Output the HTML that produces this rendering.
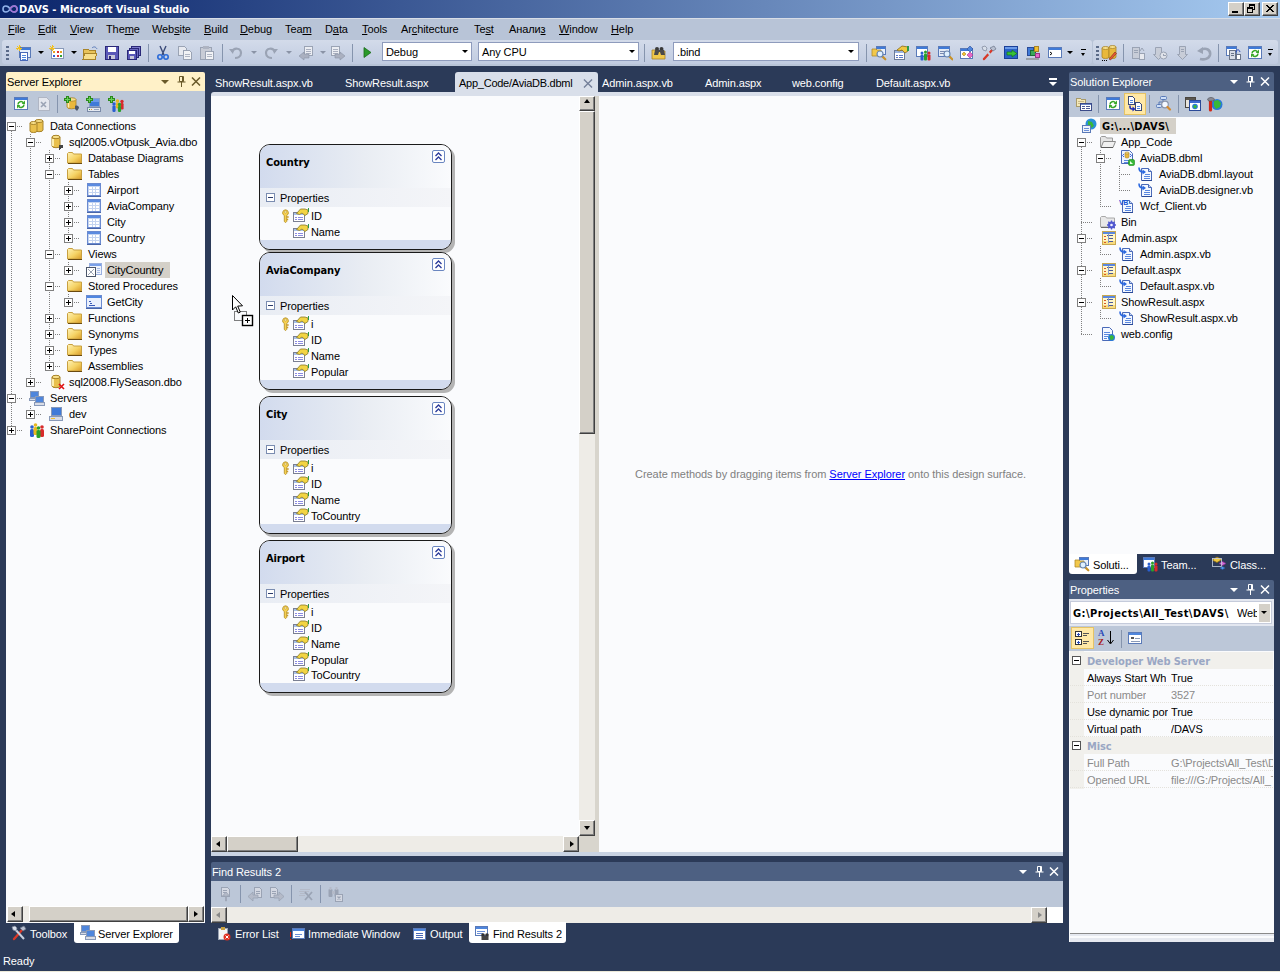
<!DOCTYPE html>
<html><head><meta charset="utf-8"><title>DAVS - Microsoft Visual Studio</title>
<style>
*{box-sizing:border-box;margin:0;padding:0}
html,body{width:1280px;height:972px;overflow:hidden}
body{background:#2b3a58;font-family:"Liberation Sans","DejaVu Sans",sans-serif;font-size:11px;color:#000;position:relative;line-height:13px}
.a{position:absolute}
.t{position:absolute;white-space:nowrap;line-height:13px;height:13px;margin-top:1px;letter-spacing:-0.1px}
.b{font-family:"DejaVu Sans Condensed","Liberation Sans",sans-serif;font-weight:bold}
u{text-decoration:underline;text-underline-offset:1px}
svg{position:absolute;display:block}
.i{position:absolute;width:16px;height:16px}
.i svg{left:0;top:0}
#title{left:0;top:0;width:1280px;height:18px;background:linear-gradient(90deg,#0a246a,#a6caf0)}
.wbtn{position:absolute;top:2px;width:16px;height:14px;background:#d4d0c8;border:1px solid;border-color:#fff #404040 #404040 #fff;box-shadow:inset -1px -1px 0 #808080}
#menu{left:0;top:18px;width:1280px;height:22px;background:#b8c4d7;border-top:1px solid #d8dde6}
#menu .t{top:3px}
#tb{left:0;top:40px;width:1280px;height:26px;background:#b8c4d7}
.tbar{position:absolute;top:0px;height:24px;background:linear-gradient(#d3dbea,#c0cbe0);border-radius:3px}
.grip{position:absolute;width:3px;background:repeating-linear-gradient(#5a6a88 0 2px,transparent 2px 4px)}
.sep{position:absolute;width:1px;background:#8594ad}
.combo{position:absolute;height:19px;background:#fff;border:1px solid #8e9bbc}
.combo .t{left:3px;top:2px}
.dd{position:absolute;width:0;height:0;border:3px solid transparent;border-top:3px solid #000;border-bottom:0}
.panel{position:absolute}
.panel:before{content:"";position:absolute;left:0;right:0;top:10px;bottom:0;background:var(--bg,#fafbfd)}
.ptitle{position:absolute;left:0;top:0;right:0;height:19px;background:#4d6082;color:#fff;border-radius:2px 2px 0 0}
.ptitle.act{background:#fff1c8;color:#000}
.ptitle .t{left:1px;top:3px}
.ptool{position:absolute;left:0;right:0;top:19px;height:26px;background:#bcc7d8}
.sb{position:absolute;background:#eeece7}
.sbtn{position:absolute;width:16px;height:16px;background:#d4d0c8;border:1px solid;border-color:#fff #404040 #404040 #fff;box-shadow:inset -1px -1px 0 #808080,inset 1px 1px 0 #d4d0c8}
.arr{position:absolute;width:0;height:0;border:3px solid transparent}
.exp{position:absolute;width:9px;height:9px;border:1px solid #808080;background:#fff}
.exp:before{content:"";position:absolute;left:1px;top:3px;width:5px;height:1px;background:#000}
.exp.plus:after{content:"";position:absolute;left:3px;top:1px;width:1px;height:5px;background:#000}
.vd{position:absolute;width:1px;background:repeating-linear-gradient(#808080 0 1px,transparent 1px 2px)}
.hd{position:absolute;height:1px;background:repeating-linear-gradient(90deg,#808080 0 1px,transparent 1px 2px)}
.btab{position:absolute;height:20px;color:#fff}
.btab.act{background:#fff;color:#000;border-radius:0 0 3px 3px}
.btab .t{top:3px}
.dtab{position:absolute;top:73px;height:19px;color:#fff}
.dtab .t{top:3px;left:0}
.ent{position:absolute;left:259px;width:193px;border:1px solid #1a1a1a;border-radius:11px;background:#fafbfd;box-shadow:3px 3px 0 #b4b4b4;overflow:hidden}
.ent .hdr{position:absolute;left:0;right:0;top:0;height:43px;background:linear-gradient(90deg,#d2dbee 0%,#e9edf3 55%,#fafbfd 100%)}
.ent .hdr .t{left:6px;top:10px;font-size:11px}
.ent .comp{position:absolute;left:0;right:0;top:43px;height:19px;background:linear-gradient(90deg,#e9edf4,#f4f5f8)}
.ent .comp .t{left:20px;top:3px}
.ent .foot{position:absolute;left:0;right:0;bottom:0;height:9px;background:#d2dbee}
.chev{position:absolute;left:172px;top:5px;width:13px;height:13px;border:1px solid #6a86c0;border-radius:2px;background:#fff}
.mbox{position:absolute;left:6px;top:48px;width:9px;height:9px;border:1px solid #7a8cb0;background:#fff}
.mbox:before{content:"";position:absolute;left:1px;top:3px;width:5px;height:1px;background:#2a3a6a}
.pg{position:absolute;left:1070px;width:203px;height:17px}
.pg .t{top:2px}
</style></head><body>
<div id="title" class="a"><svg style="left:2px;top:4px" width="16" height="10" viewBox="0 0 16 10"><path d="M1 5c0-4 5-4 7 0s7 4 7 0-5-4-7 0-7 4-7 0z" fill="none" stroke="#8fb0e8" stroke-width="1.600"/><path d="M8 5c2-4 7-4 7 0s-5 4-7 0" fill="none" stroke="#a070d0" stroke-width="1.600"/></svg><span class="t b" style="left:19px;top:2px;color:#fff;font-size:11px;letter-spacing:0px">DAVS - Microsoft Visual Studio</span><div class="wbtn" style="left:1228px"><i class="a" style="left:3px;top:8px;width:6px;height:2px;background:#000"></i></div><div class="wbtn" style="left:1244px"><i class="a" style="left:4px;top:1px;width:6px;height:6px;border:1px solid #000;border-top-width:2px"></i><i class="a" style="left:2px;top:4px;width:6px;height:6px;border:1px solid #000;border-top-width:2px;background:#d4d0c8"></i></div><div class="wbtn" style="left:1262px"><svg style="left:3px;top:2px" width="8" height="7" viewBox="0 0 8 7"><path d="M0 0l7 7M1 0l7 7M7 0l-7 7M8 0l-7 7" stroke="#000" stroke-width="1"/></svg></div></div>
<div id="menu" class="a"><span class="t " style="left:8px;top:3px;"><u>F</u>ile</span><span class="t " style="left:38px;top:3px;"><u>E</u>dit</span><span class="t " style="left:70px;top:3px;"><u>V</u>iew</span><span class="t " style="left:106px;top:3px;">The<u>m</u>e</span><span class="t " style="left:152px;top:3px;">Web<u>s</u>ite</span><span class="t " style="left:204px;top:3px;"><u>B</u>uild</span><span class="t " style="left:240px;top:3px;"><u>D</u>ebug</span><span class="t " style="left:285px;top:3px;">Tea<u>m</u></span><span class="t " style="left:325px;top:3px;">D<u>a</u>ta</span><span class="t " style="left:362px;top:3px;"><u>T</u>ools</span><span class="t " style="left:401px;top:3px;">Ar<u>c</u>hitecture</span><span class="t " style="left:474px;top:3px;">Te<u>s</u>t</span><span class="t " style="left:509px;top:3px;">Анали<u>з</u></span><span class="t " style="left:559px;top:3px;"><u>W</u>indow</span><span class="t " style="left:611px;top:3px;"><u>H</u>elp</span></div>
<div id="tb" class="a"><div class="tbar" style="left:2px;width:1090px"></div><div class="tbar" style="left:1093px;width:185px"></div><div class="grip" style="left:6px;top:6px;height:15px"></div><div class="grip" style="left:1096px;top:6px;height:15px"></div><span class="i" style="left:16px;top:5px;"><svg width="16" height="16" viewBox="0 0 16 16" shape-rendering="crispEdges"><rect x="3.5" y="2.5" width="11" height="10" fill="#e8f0fc" stroke="#5a7ab8"/><rect x="4" y="3" width="10" height="2" fill="#3f7ad8"/><rect x="4.500" y="7.500" width="7" height="8" fill="#fff" stroke="#4a6ab8"/><path d="M6 10h4M6 12h4M6 14h4" stroke="#4f86dc"/><path d="M1 1l4 4M5 1l-4 4M3 0v6M0 3h6" stroke="#f2c020"/></svg></span><div class="dd" style="left:38px;top:11px"></div><span class="i" style="left:49px;top:5px;"><svg width="16" height="16" viewBox="0 0 16 16" shape-rendering="crispEdges"><rect x="2.500" y="3.500" width="12" height="10" fill="#fff" stroke="#8899b8"/><rect x="4" y="6" width="2" height="2" fill="#e8a020"/><rect x="8" y="6" width="2" height="2" fill="#e03030"/><rect x="11" y="6" width="2" height="2" fill="#e8a020"/><rect x="4" y="10" width="2" height="2" fill="#3060d8"/><rect x="8" y="10" width="2" height="2" fill="#e03030"/><rect x="11" y="10" width="2" height="2" fill="#30a030"/><path d="M1 1l4 4M5 1l-4 4M3 0v6M0 3h6" stroke="#f2c020"/></svg></span><div class="dd" style="left:71px;top:11px"></div><span class="i" style="left:82px;top:5px;"><svg width="16" height="16" viewBox="0 0 16 16" shape-rendering="crispEdges"><path d="M1 4h5l1 1h6v9H1z" fill="#e8c35a" stroke="#a8842a"/><path d="M3 8h12l-2 6H1z" fill="#f7df8c" stroke="#a8842a"/><path d="M10 3c2-2 4-1 5 1" fill="none" stroke="#5a7ab8" shape-rendering="auto"/></svg></span><span class="i" style="left:104px;top:5px;"><svg width="16" height="16" viewBox="0 0 16 16" shape-rendering="crispEdges"><rect x="1.500" y="1.500" width="13" height="13" fill="#5a58b8" stroke="#2a2878"/><rect x="4" y="2" width="8" height="5" fill="#fff"/><rect x="4" y="10" width="7" height="4" fill="#c8c8d8"/><rect x="5" y="11" width="2" height="3" fill="#2a2878"/></svg></span><span class="i" style="left:126px;top:5px;"><svg width="16" height="16" viewBox="0 0 16 16" shape-rendering="crispEdges"><rect x="5.500" y="1.500" width="9" height="9" fill="#7a78c8" stroke="#2a2878"/><rect x="3.500" y="3.500" width="9" height="9" fill="#6a68c0" stroke="#2a2878"/><rect x="1.500" y="5.500" width="9" height="9" fill="#5a58b8" stroke="#2a2878"/><rect x="3" y="6" width="6" height="3" fill="#fff"/><rect x="4" y="11" width="4" height="3" fill="#c8c8d8"/></svg></span><div class="sep" style="left:148px;top:4px;height:18px"></div><span class="i" style="left:155px;top:5px;"><svg width="16" height="16" viewBox="0 0 16 16" shape-rendering="crispEdges"><g shape-rendering="auto"><path d="M5 1l4 9M11 1l-4 9" stroke="#3a4a78" stroke-width="1.400"/><circle cx="5" cy="12" r="2.200" fill="none" stroke="#2a6ad8" stroke-width="1.600"/><circle cx="11" cy="12" r="2.200" fill="none" stroke="#2a6ad8" stroke-width="1.600"/></g></svg></span><span class="i" style="left:177px;top:5px;"><svg width="16" height="16" viewBox="0 0 16 16" shape-rendering="crispEdges"><path d="M1.500 1.500h6l2 2v7h-8z" fill="#e8eaf0" stroke="#9aa3b4"/><path d="M6.500 5.500h6l2 2v7h-8z" fill="#f2f3f6" stroke="#9aa3b4"/><path d="M8 9h5M8 11h5" stroke="#b0b6c4"/></svg></span><span class="i" style="left:199px;top:5px;"><svg width="16" height="16" viewBox="0 0 16 16" shape-rendering="crispEdges"><rect x="1.500" y="2.500" width="11" height="12" fill="#c8ccd6" stroke="#9aa3b4"/><rect x="4" y="1" width="6" height="3" fill="#aeb4c2"/><rect x="6.500" y="6.500" width="8" height="8" fill="#f2f3f6" stroke="#9aa3b4"/><path d="M8 9h5M8 11h5" stroke="#b0b6c4"/></svg></span><div class="sep" style="left:222px;top:4px;height:18px"></div><span class="i" style="left:228px;top:5px;"><svg width="16" height="16" viewBox="0 0 16 16" shape-rendering="crispEdges"><g shape-rendering="auto"><path d="M4 7c2-5 9-4 9 1 0 4-4 5-6 5" fill="none" stroke="#9aa3b4" stroke-width="2.200"/><path d="M1 4l5 0-1 5z" fill="#9aa3b4"/></g></svg></span><div class="dd" style="left:251px;top:11px;border-top-color:#8a93a6"></div><span class="i" style="left:263px;top:5px;"><svg width="16" height="16" viewBox="0 0 16 16" shape-rendering="crispEdges"><g transform="translate(16,0) scale(-1,1)" shape-rendering="auto"><path d="M4 7c2-5 9-4 9 1 0 4-4 5-6 5" fill="none" stroke="#9aa3b4" stroke-width="2.200"/><path d="M1 4l5 0-1 5z" fill="#9aa3b4"/></g></svg></span><div class="dd" style="left:286px;top:11px;border-top-color:#8a93a6"></div><span class="i" style="left:298px;top:5px;"><svg width="16" height="16" viewBox="0 0 16 16" shape-rendering="crispEdges"><rect x="6.500" y="1.500" width="8" height="9" fill="#eceef3" stroke="#9aa3b4"/><path d="M8 4h5M8 6h5M8 8h5" stroke="#aab0c0"/><path d="M1 11l5-4v2h5v4h-5v2z" fill="#aab0c0" stroke="#8a93a6" stroke-width=".6" shape-rendering="auto"/></svg></span><div class="dd" style="left:320px;top:11px;border-top-color:#8a93a6"></div><span class="i" style="left:330px;top:5px;"><svg width="16" height="16" viewBox="0 0 16 16" shape-rendering="crispEdges"><rect x="1.500" y="1.500" width="8" height="9" fill="#eceef3" stroke="#9aa3b4"/><path d="M3 4h5M3 6h5M3 8h5" stroke="#aab0c0"/><path d="M15 11l-5-4v2h-5v4h5v2z" fill="#aab0c0" stroke="#8a93a6" stroke-width=".6" shape-rendering="auto"/></svg></span><div class="sep" style="left:352px;top:4px;height:18px"></div><svg style="left:363px;top:7px" width="9" height="11" viewBox="0 0 9 11"><path d="M1 0.500l7 5-7 5z" fill="#2a9a2a" stroke="#1a6a1a" stroke-width=".8"/></svg><div class="combo" style="left:382px;top:2px;width:90px"><span class="t">Debug</span><div class="dd" style="left:79px;top:7px"></div></div><div class="combo" style="left:478px;top:2px;width:161px"><span class="t">Any CPU</span><div class="dd" style="left:150px;top:7px"></div></div><div class="sep" style="left:644px;top:4px;height:18px"></div><span class="i" style="left:651px;top:5px;"><svg width="16" height="16" viewBox="0 0 16 16" shape-rendering="crispEdges"><path d="M1 5h5l1 1h7v8H1z" fill="#f0c84a" stroke="#a8842a" stroke-width=".8" shape-rendering="auto"/><g shape-rendering="auto"><circle cx="6" cy="4" r="2" fill="#3a3a3a"/><circle cx="10.500" cy="4" r="2" fill="#3a3a3a"/><path d="M4 5l-1 5h4l1-3h1l1 3h4l-1-5z" fill="#4a4a4a"/></g></svg></span><div class="combo" style="left:673px;top:2px;width:186px"><span class="t">.bind</span><div class="dd" style="left:174px;top:7px"></div></div><div class="sep" style="left:866px;top:4px;height:18px"></div><span class="i" style="left:871px;top:5px;"><svg width="16" height="16" viewBox="0 0 16 16" shape-rendering="crispEdges"><rect x="5.5" y="1.5" width="9" height="8" fill="#eaf1fc" stroke="#5a7ab8"/><rect x="6" y="2" width="8" height="2" fill="#3f7ad8"/><path d="M1 4h4l1 1h4v6H1z" fill="#f2c84a" stroke="#b08a2a" stroke-width=".8" shape-rendering="auto"/><g shape-rendering="auto"><path d="M11.1 11.1l3.2 3.2" stroke="#c8922a" stroke-width="2.200" stroke-linecap="round"/><circle cx="9" cy="9" r="3" fill="#dff0ff" stroke="#6a86b0" stroke-width="1.200"/></g></svg></span><span class="i" style="left:893px;top:5px;"><svg width="16" height="16" viewBox="0 0 16 16" shape-rendering="crispEdges"><rect x="1.500" y="5.500" width="10" height="9" fill="#fff" stroke="#6a7a98"/><rect x="2" y="6" width="9" height="2" fill="#9ab4e0"/><path d="M3 10h2M6 10h4M3 12h2M6 12h4" stroke="#5a78c8"/><path d="M4 5l5-4 6 1v4l-3 2-3-3-3 1z" fill="#f0c840" stroke="#8a6a18" stroke-width=".8" shape-rendering="auto"/><rect x="14" y="1" width="1.500" height="5" fill="#2a9a4a"/></svg></span><span class="i" style="left:915px;top:5px;"><svg width="16" height="16" viewBox="0 0 16 16" shape-rendering="crispEdges"><rect x="1.5" y="1.5" width="11" height="10" fill="#fff" stroke="#5a7ab8"/><rect x="2" y="2" width="10" height="2" fill="#3f7ad8"/><g shape-rendering="auto"><circle cx="7" cy="8" r="1.500" fill="#2a5fd0"/><rect x="5.500" y="9.500" width="3" height="6" rx="1" fill="#2a5fd0"/><circle cx="10.500" cy="7" r="1.500" fill="#2aa02a"/><rect x="9" y="8.500" width="3" height="7" rx="1" fill="#2aa02a"/><circle cx="14" cy="8" r="1.500" fill="#d82a2a"/><rect x="12.500" y="9.500" width="3" height="6" rx="1" fill="#d82a2a"/></g></svg></span><span class="i" style="left:937px;top:5px;"><svg width="16" height="16" viewBox="0 0 16 16" shape-rendering="crispEdges"><rect x="1.5" y="1.5" width="11" height="10" fill="#e4ebf6" stroke="#5a7ab8"/><rect x="2" y="2" width="10" height="2" fill="#3f7ad8"/><path d="M3 6h7M3 8h5" stroke="#7a8ab0"/><g shape-rendering="auto"><path d="M12.1 11.1l3.2 3.2" stroke="#c8922a" stroke-width="2.200" stroke-linecap="round"/><circle cx="10" cy="9" r="3" fill="#dff0ff" stroke="#6a86b0" stroke-width="1.200"/></g></svg></span><span class="i" style="left:959px;top:5px;"><svg width="16" height="16" viewBox="0 0 16 16" shape-rendering="crispEdges"><rect x="1.5" y="3.5" width="12" height="10" fill="#fff" stroke="#5a7ab8"/><rect x="2" y="4" width="11" height="2" fill="#3f7ad8"/><g shape-rendering="auto"><path d="M5 7l2 2-2 2-2-2z" fill="#f0c030" stroke="#a88428" stroke-width=".6"/><path d="M11 1l3 3-3 3-3-3z" fill="#4f86dc" stroke="#2a4a98" stroke-width=".6"/><path d="M11 7l3 3-3 3-3-3z" fill="#e868c8" stroke="#983888" stroke-width=".6"/></g></svg></span><span class="i" style="left:981px;top:5px;"><svg width="16" height="16" viewBox="0 0 16 16" shape-rendering="crispEdges"><g shape-rendering="auto"><path d="M3 14l9-10" stroke="#d83828" stroke-width="2.400" stroke-linecap="round"/><path d="M9 3l4-2 2 3-3 2z" fill="#b8c0d0" stroke="#6a7488" stroke-width=".7"/><path d="M3 3l10 11" stroke="#c8d0de" stroke-width="2"/><path d="M1 2l3-1 2 2-1 3-3-1z" fill="#d8dfea" stroke="#7a8498" stroke-width=".7"/></g></svg></span><span class="i" style="left:1003px;top:5px;"><svg width="16" height="16" viewBox="0 0 16 16" shape-rendering="crispEdges"><rect x="1.500" y="1.500" width="13" height="12" fill="#2a62c8" stroke="#1a3f98"/><rect x="2" y="2" width="12" height="2" fill="#6a9ae8"/><path d="M4 7h5V5l5 3.500-5 3.500v-2H4z" fill="#38c038" stroke="#187818" stroke-width=".7" shape-rendering="auto"/></svg></span><span class="i" style="left:1025px;top:5px;"><svg width="16" height="16" viewBox="0 0 16 16" shape-rendering="crispEdges"><rect x="2.500" y="2.500" width="6" height="8" fill="#3f7ad8" stroke="#2a4a98"/><rect x="5.500" y="5.500" width="5" height="5" fill="#38a858" stroke="#1a6a38"/><rect x="9.500" y="1.500" width="4" height="5" fill="#f0c030" stroke="#a88428"/><rect x="10.500" y="8.500" width="4" height="4" fill="#e868c8" stroke="#983888"/><rect x="1" y="13" width="13" height="2" fill="#9aa0a8"/></svg></span><span class="i" style="left:1047px;top:5px;"><svg width="16" height="16" viewBox="0 0 16 16" shape-rendering="crispEdges"><rect x="1.5" y="2.5" width="13" height="10" fill="#fff" stroke="#5a7ab8"/><rect x="2" y="3" width="12" height="2" fill="#3f7ad8"/><path d="M3 7l2 1.500-2 1.500" fill="none" stroke="#000" shape-rendering="auto"/></svg></span><div class="dd" style="left:1067px;top:11px"></div><div class="a" style="left:1081px;top:9px;width:5px;height:1px;background:#000"></div><div class="dd" style="left:1081px;top:13px;border-width:3px 2.500px 0"></div><span class="i" style="left:1101px;top:5px;"><svg width="16" height="16" viewBox="0 0 16 16" shape-rendering="crispEdges"><g shape-rendering="auto"><path d="M1 3v9a3.500 1.500 0 0 0 7 0V3z" fill="#e9b83c" stroke="#a8842a" stroke-width=".8"/><ellipse cx="4.500" cy="3" rx="3.500" ry="1.500" fill="#f8e08a" stroke="#a8842a" stroke-width=".8"/><path d="M8 2v10a3.500 1.500 0 0 0 7 0V2z" fill="#e9b83c" stroke="#a8842a" stroke-width=".8"/><ellipse cx="11.500" cy="2" rx="3.500" ry="1.500" fill="#f8e08a" stroke="#a8842a" stroke-width=".8"/><path d="M8 14l6-7 1.500 1.500-6 6.500z" fill="#e85838" stroke="#7a2a18" stroke-width=".6"/></g><path d="M1 15h1M3 15h1M5 15h1" stroke="#000"/></svg></span><div class="sep" style="left:1123px;top:4px;height:18px"></div><span class="i" style="left:1130px;top:5px;"><svg width="16" height="16" viewBox="0 0 16 16" shape-rendering="crispEdges"><rect x="2.500" y="2.500" width="7" height="11" fill="#c8cdd8" stroke="#9aa3b4"/><path d="M4 5h4M4 7h4" stroke="#9aa3b4"/><rect x="9.500" y="8.500" width="5" height="6" fill="#e8eaf0" stroke="#9aa3b4"/><path d="M10 6l2-3 2 3" fill="none" stroke="#9aa3b4" shape-rendering="auto"/></svg></span><span class="i" style="left:1152px;top:5px;"><svg width="16" height="16" viewBox="0 0 16 16" shape-rendering="crispEdges"><path d="M3.500 2.500h6v7h2l-5 5-5-5h2z" fill="#c8cdd8" stroke="#9aa3b4" shape-rendering="auto"/><circle cx="11.500" cy="10.500" r="3.500" fill="#e0e3ea" stroke="#9aa3b4" shape-rendering="auto"/><path d="M11.500 8.500v2h2" fill="none" stroke="#9aa3b4"/></svg></span><span class="i" style="left:1174px;top:5px;"><svg width="16" height="16" viewBox="0 0 16 16" shape-rendering="crispEdges"><path d="M5.500 1.500h6v8h2l-5 5-5-5h2z" fill="#c8cdd8" stroke="#9aa3b4" shape-rendering="auto"/><path d="M7 4h3M7 6h3" stroke="#9aa3b4"/></svg></span><span class="i" style="left:1196px;top:5px;"><svg width="16" height="16" viewBox="0 0 16 16" shape-rendering="crispEdges"><g shape-rendering="auto"><path d="M5 5c5-3 10 0 9 5-1 4-6 5-10 4" fill="none" stroke="#9aa3b4" stroke-width="2.600"/><path d="M1 6l6-4v7z" fill="#9aa3b4"/></g></svg></span><div class="sep" style="left:1218px;top:4px;height:18px"></div><span class="i" style="left:1225px;top:5px;"><svg width="16" height="16" viewBox="0 0 16 16" shape-rendering="crispEdges"><rect x="1.5" y="1.5" width="10" height="9" fill="#fff" stroke="#5a7ab8"/><rect x="2" y="2" width="9" height="2" fill="#3f7ad8"/><rect x="4.500" y="5.500" width="6" height="9" fill="#d8dce6" stroke="#6a7488"/><path d="M6 8h3M6 10h3" stroke="#6a7488"/><rect x="11.500" y="9.500" width="4" height="5" fill="#fff" stroke="#6a7488"/><path d="M11 7c1-3 3-3 4 0" fill="none" stroke="#2a4ab8" shape-rendering="auto"/></svg></span><span class="i" style="left:1247px;top:5px;"><svg width="16" height="16" viewBox="0 0 16 16" shape-rendering="crispEdges"><rect x="1.5" y="1.5" width="13" height="12" fill="#fff" stroke="#5a7ab8"/><rect x="2" y="2" width="12" height="2" fill="#3f7ad8"/><g shape-rendering="auto"><path d="M5 8.500A3 3 0 0 1 10.400 6.800" fill="none" stroke="#3aa82a" stroke-width="1.600"/><path d="M11 8.500A3 3 0 0 1 5.600 10.200" fill="none" stroke="#3aa82a" stroke-width="1.600"/><path d="M12 4.600v3.400h-3.400z" fill="#3aa82a"/><path d="M4 12.400v-3.400h3.400z" fill="#3aa82a"/></g></svg></span><div class="a" style="left:1268px;top:9px;width:5px;height:1px;background:#000"></div><div class="dd" style="left:1268px;top:13px;border-width:3px 2.500px 0"></div></div>
<div class="panel" style="left:6px;top:72px;width:199px;height:851px"><div class="ptitle act"><span class="t">Server Explorer</span><div class="dd" style="left:155px;top:8px;border-width:4px 4px 0;border-top-color:#6a5a2a"></div><svg style="left:171px;top:4px" width="9" height="11" viewBox="0 0 9 11"><path d="M2.500 0.500h4v5h-4zM0.500 6h8M4.500 6v5" fill="none" stroke="#6a5a2a" stroke-width="1"/><path d="M5.500 1v5" stroke="#6a5a2a"/></svg><svg style="left:185px;top:5px" width="10" height="9" viewBox="0 0 10 9" shape-rendering="auto"><path d="M1 0.500l8 8M9 0.500l-8 8" stroke="#6a5a2a" stroke-width="1.500"/></svg></div><div class="ptool"><span class="i" style="left:7px;top:5px;"><svg width="16" height="16" viewBox="0 0 16 16" shape-rendering="crispEdges"><rect x="1.5" y="1.5" width="13" height="12" fill="#fff" stroke="#5a7ab8"/><rect x="2" y="2" width="12" height="2" fill="#3f7ad8"/><g shape-rendering="auto"><path d="M5 8.500A3 3 0 0 1 10.400 6.800" fill="none" stroke="#3aa82a" stroke-width="1.600"/><path d="M11 8.500A3 3 0 0 1 5.600 10.200" fill="none" stroke="#3aa82a" stroke-width="1.600"/><path d="M12 4.600v3.400h-3.400z" fill="#3aa82a"/><path d="M4 12.400v-3.400h3.400z" fill="#3aa82a"/></g></svg></span><span class="i" style="left:30px;top:5px;"><svg width="16" height="16" viewBox="0 0 16 16" shape-rendering="crispEdges"><path d="M2.500 1.500h8l3 3v10h-11z" fill="#e4e7ee" stroke="#b0b6c4"/><path d="M5 6l5 5M10 6l-5 5" stroke="#9aa3b4" stroke-width="1.600" shape-rendering="auto"/></svg></span><div class="sep" style="left:51px;top:4px;height:18px"></div><span class="i" style="left:58px;top:5px;"><svg width="16" height="16" viewBox="0 0 16 16" shape-rendering="crispEdges"><g shape-rendering="auto"><path d="M3 3.500v7.500a4.500 1.800 0 0 0 9 0V3.500z" fill="#eab83c" stroke="#a8842a" stroke-width=".8"/><ellipse cx="7.500" cy="3.500" rx="4.500" ry="1.800" fill="#f8e08a" stroke="#a8842a" stroke-width=".8"/><path d="M4.500 5v6.500" stroke="#fbeeb0" stroke-width="1.500"/><path d="M11 10c2-1 4 0 4 2l-2 3-2-2z" fill="#4a5568"/></g><path d="M2.500 0.500h2v2h2v2h-2v2h-2v-2h-2v-2h2z" fill="#6ad05a" stroke="#2a8a1a" stroke-width="1"/></svg></span><span class="i" style="left:80px;top:5px;"><svg width="16" height="16" viewBox="0 0 16 16" shape-rendering="crispEdges"><rect x="3.500" y="2.500" width="10" height="8" fill="#3f7ad8" stroke="#8aa0c8"/><rect x="4" y="3" width="9" height="3" fill="#6a9ae8"/><rect x="1.500" y="11.500" width="13" height="4" fill="#e4e8f0" stroke="#7a8aa8"/><rect x="3" y="13" width="1" height="1" fill="#38a838"/><rect x="5" y="13" width="1" height="1" fill="#e8a020"/><path d="M8 13.500h5" stroke="#9aa8c0"/><path d="M2.500 0.500h2v2h2v2h-2v2h-2v-2h-2v-2h2z" fill="#6ad05a" stroke="#2a8a1a" stroke-width="1"/></svg></span><span class="i" style="left:102px;top:5px;"><svg width="16" height="16" viewBox="0 0 16 16" shape-rendering="crispEdges"><g shape-rendering="auto"><circle cx="9.500" cy="5" r="1.700" fill="#e8b820"/><rect x="8" y="6.500" width="3.200" height="6" rx="1.200" fill="#e8b820"/><circle cx="14" cy="5.500" r="1.700" fill="#d82a2a"/><rect x="12.400" y="7" width="3.200" height="6.500" rx="1.200" fill="#d82a2a"/><circle cx="6" cy="8" r="1.700" fill="#2a5fd0"/><rect x="4.400" y="9.500" width="3.200" height="6.500" rx="1.200" fill="#2a5fd0"/><circle cx="11.500" cy="8.500" r="1.700" fill="#2aa02a"/><rect x="9.900" y="10" width="3.200" height="6" rx="1.200" fill="#2aa02a"/></g><path d="M2.500 0.500h2v2h2v2h-2v2h-2v-2h-2v-2h2z" fill="#6ad05a" stroke="#2a8a1a" stroke-width="1"/></svg></span></div><div class="vd" style="left:5px;top:59px;height:295px"></div><div class="vd" style="left:24px;top:62px;height:248px"></div><div class="vd" style="left:43px;top:78px;height:216px"></div><div class="vd" style="left:62px;top:110px;height:56px"></div><div class="vd" style="left:62px;top:190px;height:8px"></div><div class="vd" style="left:62px;top:222px;height:8px"></div><div class="vd" style="left:24px;top:334px;height:8px"></div><div class="hd" style="left:11px;top:54px;width:6px"></div><div class="exp " style="left:1px;top:50px"></div><span class="i" style="left:23px;top:46px;"><svg width="16" height="16" viewBox="0 0 16 16" shape-rendering="crispEdges"><path d="M6 3v9a3.5 1.5 0 0 0 8 0V3z" fill="#e9c04c" stroke="#a8842a" shape-rendering="auto"/><ellipse cx="10" cy="3" rx="4" ry="1.5" fill="#f8e08a" stroke="#a8842a" shape-rendering="auto"/><path d="M1 5v8a3.5 1.5 0 0 0 7 0V5z" fill="#e9c04c" stroke="#a8842a" shape-rendering="auto"/><ellipse cx="4.5" cy="5" rx="3.5" ry="1.5" fill="#f8e08a" stroke="#a8842a" shape-rendering="auto"/></svg></span><span class="t " style="left:44px;top:47px;">Data Connections</span><div class="hd" style="left:30px;top:70px;width:6px"></div><div class="exp " style="left:20px;top:66px"></div><span class="i" style="left:44px;top:62px;"><svg width="16" height="16" viewBox="0 0 16 16" shape-rendering="crispEdges"><path d="M2 3v9a4 1.7 0 0 0 8 0V3z" fill="#e9c04c" stroke="#a8842a" shape-rendering="auto"/><ellipse cx="6" cy="3" rx="4" ry="1.7" fill="#f8e08a" stroke="#a8842a" shape-rendering="auto"/><path d="M3 5v7" stroke="#fbeeb0" stroke-width="1.5"/><path d="M9 11h4v3h-2l-2 2z" fill="#444"/></svg></span><span class="t " style="left:63px;top:63px;">sql2005.vOtpusk_Avia.dbo</span><div class="hd" style="left:49px;top:86px;width:6px"></div><div class="exp plus" style="left:39px;top:82px"></div><span class="i" style="left:61px;top:78px;"><svg width="16" height="16" viewBox="0 0 16 16" shape-rendering="crispEdges"><defs><linearGradient id="fg" x1="0" y1="0" x2="1" y2="1"><stop offset="0" stop-color="#fff3b8"/><stop offset=".55" stop-color="#f5d264"/><stop offset="1" stop-color="#d89a28"/></linearGradient></defs><path d="M0.500 3.500l1-1h4l1 1.500h8v9h-14z" fill="url(#fg)" stroke="#c8a040" stroke-width="1" shape-rendering="auto"/><path d="M1 13.500h14" stroke="#6a4a10"/></svg></span><span class="t " style="left:82px;top:79px;">Database Diagrams</span><div class="hd" style="left:49px;top:102px;width:6px"></div><div class="exp " style="left:39px;top:98px"></div><span class="i" style="left:61px;top:94px;"><svg width="16" height="16" viewBox="0 0 16 16" shape-rendering="crispEdges"><defs><linearGradient id="fg" x1="0" y1="0" x2="1" y2="1"><stop offset="0" stop-color="#fff3b8"/><stop offset=".55" stop-color="#f5d264"/><stop offset="1" stop-color="#d89a28"/></linearGradient></defs><path d="M0.500 3.500l1-1h4l1 1.500h8v9h-14z" fill="url(#fg)" stroke="#c8a040" stroke-width="1" shape-rendering="auto"/><path d="M1 13.500h14" stroke="#6a4a10"/></svg></span><span class="t " style="left:82px;top:95px;">Tables</span><div class="hd" style="left:68px;top:118px;width:6px"></div><div class="exp plus" style="left:58px;top:114px"></div><span class="i" style="left:80px;top:110px;"><svg width="16" height="16" viewBox="0 0 16 16" shape-rendering="crispEdges"><rect x="1.500" y="1.500" width="13" height="12" fill="#fff" stroke="#6a8ad0"/><rect x="2" y="2" width="12" height="2" fill="#5b8be0"/><rect x="2" y="4" width="12" height="9" fill="#c4d4f0"/><path d="M3 5h2.500v2H3zM6.500 5H9v2H6.500zM10 5h3v2h-3zM3 8h2.500v2H3zM6.500 8H9v2H6.500zM10 8h3v2h-3zM3 11h2.500v1.500H3zM6.500 11H9v1.500H6.500zM10 11h3v1.500h-3z" fill="#fff"/><path d="M1 14h14" stroke="#4a66a8"/></svg></span><span class="t " style="left:101px;top:111px;">Airport</span><div class="hd" style="left:68px;top:134px;width:6px"></div><div class="exp plus" style="left:58px;top:130px"></div><span class="i" style="left:80px;top:126px;"><svg width="16" height="16" viewBox="0 0 16 16" shape-rendering="crispEdges"><rect x="1.500" y="1.500" width="13" height="12" fill="#fff" stroke="#6a8ad0"/><rect x="2" y="2" width="12" height="2" fill="#5b8be0"/><rect x="2" y="4" width="12" height="9" fill="#c4d4f0"/><path d="M3 5h2.500v2H3zM6.500 5H9v2H6.500zM10 5h3v2h-3zM3 8h2.500v2H3zM6.500 8H9v2H6.500zM10 8h3v2h-3zM3 11h2.500v1.500H3zM6.500 11H9v1.500H6.500zM10 11h3v1.500h-3z" fill="#fff"/><path d="M1 14h14" stroke="#4a66a8"/></svg></span><span class="t " style="left:101px;top:127px;">AviaCompany</span><div class="hd" style="left:68px;top:150px;width:6px"></div><div class="exp plus" style="left:58px;top:146px"></div><span class="i" style="left:80px;top:142px;"><svg width="16" height="16" viewBox="0 0 16 16" shape-rendering="crispEdges"><rect x="1.500" y="1.500" width="13" height="12" fill="#fff" stroke="#6a8ad0"/><rect x="2" y="2" width="12" height="2" fill="#5b8be0"/><rect x="2" y="4" width="12" height="9" fill="#c4d4f0"/><path d="M3 5h2.500v2H3zM6.500 5H9v2H6.500zM10 5h3v2h-3zM3 8h2.500v2H3zM6.500 8H9v2H6.500zM10 8h3v2h-3zM3 11h2.500v1.500H3zM6.500 11H9v1.500H6.500zM10 11h3v1.500h-3z" fill="#fff"/><path d="M1 14h14" stroke="#4a66a8"/></svg></span><span class="t " style="left:101px;top:143px;">City</span><div class="hd" style="left:68px;top:166px;width:6px"></div><div class="exp plus" style="left:58px;top:162px"></div><span class="i" style="left:80px;top:158px;"><svg width="16" height="16" viewBox="0 0 16 16" shape-rendering="crispEdges"><rect x="1.500" y="1.500" width="13" height="12" fill="#fff" stroke="#6a8ad0"/><rect x="2" y="2" width="12" height="2" fill="#5b8be0"/><rect x="2" y="4" width="12" height="9" fill="#c4d4f0"/><path d="M3 5h2.500v2H3zM6.500 5H9v2H6.500zM10 5h3v2h-3zM3 8h2.500v2H3zM6.500 8H9v2H6.500zM10 8h3v2h-3zM3 11h2.500v1.500H3zM6.500 11H9v1.500H6.500zM10 11h3v1.500h-3z" fill="#fff"/><path d="M1 14h14" stroke="#4a66a8"/></svg></span><span class="t " style="left:101px;top:159px;">Country</span><div class="hd" style="left:49px;top:182px;width:6px"></div><div class="exp " style="left:39px;top:178px"></div><span class="i" style="left:61px;top:174px;"><svg width="16" height="16" viewBox="0 0 16 16" shape-rendering="crispEdges"><defs><linearGradient id="fg" x1="0" y1="0" x2="1" y2="1"><stop offset="0" stop-color="#fff3b8"/><stop offset=".55" stop-color="#f5d264"/><stop offset="1" stop-color="#d89a28"/></linearGradient></defs><path d="M0.500 3.500l1-1h4l1 1.500h8v9h-14z" fill="url(#fg)" stroke="#c8a040" stroke-width="1" shape-rendering="auto"/><path d="M1 13.500h14" stroke="#6a4a10"/></svg></span><span class="t " style="left:82px;top:175px;">Views</span><div class="hd" style="left:68px;top:198px;width:6px"></div><div class="exp plus" style="left:58px;top:194px"></div><span class="i" style="left:80px;top:190px;"><svg width="16" height="16" viewBox="0 0 16 16" shape-rendering="crispEdges"><rect x="3.500" y="1.500" width="12" height="11" fill="#eef3fc" stroke="#9ab0e0"/><rect x="4" y="2" width="11" height="2" fill="#7aa0e8"/><path d="M11 6h3M11 8h3M11 10h3" stroke="#a8bce8"/><rect x="0.500" y="5.500" width="9" height="9" fill="#fff" stroke="#4a5468"/><path d="M2 7l6 6M8 7l-6 6" stroke="#9aa3b4" stroke-width="1" shape-rendering="auto"/></svg></span><div class="a" style="left:99px;top:190px;width:65px;height:16px;background:#d4d0c8"></div><span class="t " style="left:101px;top:191px;">CityCountry</span><div class="hd" style="left:49px;top:214px;width:6px"></div><div class="exp " style="left:39px;top:210px"></div><span class="i" style="left:61px;top:206px;"><svg width="16" height="16" viewBox="0 0 16 16" shape-rendering="crispEdges"><defs><linearGradient id="fg" x1="0" y1="0" x2="1" y2="1"><stop offset="0" stop-color="#fff3b8"/><stop offset=".55" stop-color="#f5d264"/><stop offset="1" stop-color="#d89a28"/></linearGradient></defs><path d="M0.500 3.500l1-1h4l1 1.500h8v9h-14z" fill="url(#fg)" stroke="#c8a040" stroke-width="1" shape-rendering="auto"/><path d="M1 13.500h14" stroke="#6a4a10"/></svg></span><span class="t " style="left:82px;top:207px;">Stored Procedures</span><div class="hd" style="left:68px;top:230px;width:6px"></div><div class="exp plus" style="left:58px;top:226px"></div><span class="i" style="left:80px;top:222px;"><svg width="16" height="16" viewBox="0 0 16 16" shape-rendering="crispEdges"><rect x="0.500" y="1.500" width="15" height="12" fill="#fff" stroke="#6a8ad0"/><rect x="1" y="2" width="14" height="2" fill="#4f86e0"/><rect x="1" y="4" width="14" height="9" fill="#eaf0fc"/><path d="M3 7h2M4 9h2M3 11h6" stroke="#3a5ab8"/><path d="M0 14.500h16" stroke="#4a66a8"/></svg></span><span class="t " style="left:101px;top:223px;">GetCity</span><div class="hd" style="left:49px;top:246px;width:6px"></div><div class="exp plus" style="left:39px;top:242px"></div><span class="i" style="left:61px;top:238px;"><svg width="16" height="16" viewBox="0 0 16 16" shape-rendering="crispEdges"><defs><linearGradient id="fg" x1="0" y1="0" x2="1" y2="1"><stop offset="0" stop-color="#fff3b8"/><stop offset=".55" stop-color="#f5d264"/><stop offset="1" stop-color="#d89a28"/></linearGradient></defs><path d="M0.500 3.500l1-1h4l1 1.500h8v9h-14z" fill="url(#fg)" stroke="#c8a040" stroke-width="1" shape-rendering="auto"/><path d="M1 13.500h14" stroke="#6a4a10"/></svg></span><span class="t " style="left:82px;top:239px;">Functions</span><div class="hd" style="left:49px;top:262px;width:6px"></div><div class="exp plus" style="left:39px;top:258px"></div><span class="i" style="left:61px;top:254px;"><svg width="16" height="16" viewBox="0 0 16 16" shape-rendering="crispEdges"><defs><linearGradient id="fg" x1="0" y1="0" x2="1" y2="1"><stop offset="0" stop-color="#fff3b8"/><stop offset=".55" stop-color="#f5d264"/><stop offset="1" stop-color="#d89a28"/></linearGradient></defs><path d="M0.500 3.500l1-1h4l1 1.500h8v9h-14z" fill="url(#fg)" stroke="#c8a040" stroke-width="1" shape-rendering="auto"/><path d="M1 13.500h14" stroke="#6a4a10"/></svg></span><span class="t " style="left:82px;top:255px;">Synonyms</span><div class="hd" style="left:49px;top:278px;width:6px"></div><div class="exp plus" style="left:39px;top:274px"></div><span class="i" style="left:61px;top:270px;"><svg width="16" height="16" viewBox="0 0 16 16" shape-rendering="crispEdges"><defs><linearGradient id="fg" x1="0" y1="0" x2="1" y2="1"><stop offset="0" stop-color="#fff3b8"/><stop offset=".55" stop-color="#f5d264"/><stop offset="1" stop-color="#d89a28"/></linearGradient></defs><path d="M0.500 3.500l1-1h4l1 1.500h8v9h-14z" fill="url(#fg)" stroke="#c8a040" stroke-width="1" shape-rendering="auto"/><path d="M1 13.500h14" stroke="#6a4a10"/></svg></span><span class="t " style="left:82px;top:271px;">Types</span><div class="hd" style="left:49px;top:294px;width:6px"></div><div class="exp plus" style="left:39px;top:290px"></div><span class="i" style="left:61px;top:286px;"><svg width="16" height="16" viewBox="0 0 16 16" shape-rendering="crispEdges"><defs><linearGradient id="fg" x1="0" y1="0" x2="1" y2="1"><stop offset="0" stop-color="#fff3b8"/><stop offset=".55" stop-color="#f5d264"/><stop offset="1" stop-color="#d89a28"/></linearGradient></defs><path d="M0.500 3.500l1-1h4l1 1.500h8v9h-14z" fill="url(#fg)" stroke="#c8a040" stroke-width="1" shape-rendering="auto"/><path d="M1 13.500h14" stroke="#6a4a10"/></svg></span><span class="t " style="left:82px;top:287px;">Assemblies</span><div class="hd" style="left:30px;top:310px;width:6px"></div><div class="exp plus" style="left:20px;top:306px"></div><span class="i" style="left:44px;top:302px;"><svg width="16" height="16" viewBox="0 0 16 16" shape-rendering="crispEdges"><path d="M2 3v9a4 1.7 0 0 0 8 0V3z" fill="#e9c04c" stroke="#a8842a" shape-rendering="auto"/><ellipse cx="6" cy="3" rx="4" ry="1.7" fill="#f8e08a" stroke="#a8842a" shape-rendering="auto"/><path d="M3 5v7" stroke="#fbeeb0" stroke-width="1.5"/><path d="M9 10l5 5M14 10l-5 5" stroke="#e01010" stroke-width="1.6" shape-rendering="auto"/></svg></span><span class="t " style="left:63px;top:303px;">sql2008.FlySeason.dbo</span><div class="hd" style="left:11px;top:326px;width:6px"></div><div class="exp " style="left:1px;top:322px"></div><span class="i" style="left:23px;top:318px;"><svg width="16" height="16" viewBox="0 0 16 16" shape-rendering="crispEdges"><rect x="1" y="1" width="8" height="6" fill="#4f86dc" stroke="#8899b8"/><rect x="0.5" y="8" width="9" height="2" fill="#d8dce6" stroke="#8899b8"/><rect x="6" y="6" width="8" height="6" fill="#4f86dc" stroke="#8899b8"/><rect x="5.5" y="12.500" width="10" height="2.500" fill="#d8dce6" stroke="#8899b8"/></svg></span><span class="t " style="left:44px;top:319px;">Servers</span><div class="hd" style="left:30px;top:342px;width:6px"></div><div class="exp plus" style="left:20px;top:338px"></div><span class="i" style="left:42px;top:334px;"><svg width="16" height="16" viewBox="0 0 16 16" shape-rendering="crispEdges"><rect x="3" y="1.5" width="10" height="8" fill="#3f7ad8" stroke="#8899b8"/><rect x="1.5" y="10.500" width="13" height="4" fill="#d8dce6" stroke="#8899b8"/><rect x="3" y="12" width="4" height="1" fill="#f2c030"/></svg></span><span class="t " style="left:63px;top:335px;">dev</span><div class="hd" style="left:11px;top:358px;width:6px"></div><div class="exp plus" style="left:1px;top:354px"></div><span class="i" style="left:23px;top:350px;"><svg width="16" height="16" viewBox="0 0 16 16" shape-rendering="crispEdges"><g shape-rendering="auto"><circle cx="3" cy="5" r="1.8" fill="#2a5fd0"/><rect x="1" y="7" width="4" height="8" rx="1.500" fill="#2a5fd0"/><circle cx="13" cy="5" r="1.8" fill="#d82a2a"/><rect x="11" y="7" width="4" height="8" rx="1.500" fill="#d82a2a"/><circle cx="6.500" cy="3" r="1.8" fill="#e8b820"/><rect x="4.500" y="5" width="4" height="8" rx="1.500" fill="#e8b820"/><circle cx="9.500" cy="6" r="1.8" fill="#2aa02a"/><rect x="7.500" y="8" width="4" height="8" rx="1.500" fill="#2aa02a"/></g></svg></span><span class="t " style="left:44px;top:351px;">SharePoint Connections</span><div class="sb" style="left:1px;top:834px;width:197px;height:16px"><div class="sbtn" style="left:0;top:0"><div class="arr" style="left:3px;top:4px;border-right:4px solid #000;border-left:0"></div></div><div class="sbtn" style="left:22px;top:0;width:159px"></div><div class="sbtn" style="left:181px;top:0"><div class="arr" style="left:5px;top:4px;border-left:4px solid #000;border-right:0"></div></div></div></div>
<div class="btab" style="left:6px;top:924px;width:68px"><span class="i" style="left:5px;top:1px;"><svg width="16" height="16" viewBox="0 0 16 16" shape-rendering="crispEdges"><g shape-rendering="auto"><path d="M3 14l9-10" stroke="#d83828" stroke-width="2.400" stroke-linecap="round"/><path d="M9 3l4-2 2 3-3 2z" fill="#b8c0d0" stroke="#6a7488" stroke-width=".7"/><path d="M3 3l10 11" stroke="#c8d0de" stroke-width="2"/><path d="M1 2l3-1 2 2-1 3-3-1z" fill="#d8dfea" stroke="#7a8498" stroke-width=".7"/></g></svg></span><span class="t " style="left:24px;top:3px;">Toolbox</span></div><div class="btab act" style="left:74px;top:922px;width:105px;height:21px"><span class="i" style="left:6px;top:2px;"><svg width="16" height="16" viewBox="0 0 16 16" shape-rendering="crispEdges"><rect x="1" y="1" width="8" height="6" fill="#4f86dc" stroke="#8899b8"/><rect x="0.5" y="8" width="9" height="2" fill="#d8dce6" stroke="#8899b8"/><rect x="6" y="6" width="8" height="6" fill="#4f86dc" stroke="#8899b8"/><rect x="5.5" y="12.500" width="10" height="2.500" fill="#d8dce6" stroke="#8899b8"/></svg></span><span class="t " style="left:24px;top:5px;">Server Explorer</span></div>
<div class="dtab" style="left:215px"><span class="t">ShowResult.aspx.vb</span></div><div class="dtab" style="left:345px"><span class="t">ShowResult.aspx</span></div><div class="dtab" style="left:455px;top:72px;width:143px;height:24px;background:#d9dfea;border-radius:3px 3px 0 0;color:#000"><span class="t" style="left:4px;top:4px;letter-spacing:-0.25px">App_Code/AviaDB.dbml</span><svg style="left:128px;top:7px" width="10" height="9" viewBox="0 0 11 10" shape-rendering="auto"><path d="M1 0.500l9 9M10 0.500l-9 9" stroke="#75809a" stroke-width="1.500"/></svg></div><div class="dtab" style="left:602px"><span class="t">Admin.aspx.vb</span></div><div class="dtab" style="left:705px"><span class="t">Admin.aspx</span></div><div class="dtab" style="left:792px"><span class="t">web.config</span></div><div class="dtab" style="left:876px"><span class="t">Default.aspx.vb</span></div><div class="a" style="left:1049px;top:78px;width:8px;height:2px;background:#fff"></div><div class="dd" style="left:1049px;top:82px;border-width:4px 4px 0;border-top-color:#fff"></div><div class="a" style="left:211px;top:92px;width:852px;height:764px;background:#d9dfea;border-radius:3px 0 0 0"></div><div class="a" style="left:211px;top:96px;width:368px;height:740px;background:#fafbfd"></div><div class="a" style="left:579px;top:96px;width:20px;height:756px;background:#d8d5cd"></div><div class="a" style="left:599px;top:96px;width:464px;height:756px;background:#fafbfd"></div><div class="a" style="left:211px;top:852px;width:852px;height:4px;background:#c9d3e3"></div><div class="sb" style="left:579px;top:96px;width:16px;height:740px"><div class="sbtn" style="left:0;top:0;height:15px"><div class="arr" style="left:4px;top:2px;border-bottom:4px solid #000;border-top:0;border-width:0 3.500px 4px"></div></div><div class="sbtn" style="left:0;top:15px;height:323px"></div><div class="sbtn" style="left:0;top:724px"><div class="arr" style="left:4px;top:5px;border-top:4px solid #000;border-bottom:0;border-width:4px 3.500px 0"></div></div></div><div class="sb" style="left:211px;top:836px;width:368px;height:16px"><div class="sbtn" style="left:0;top:0"><div class="arr" style="left:4px;top:4px;border-right:4px solid #000;border-left:0"></div></div><div class="sbtn" style="left:16px;top:0;width:71px"></div><div class="sbtn" style="left:352px;top:0"><div class="arr" style="left:6px;top:4px;border-left:4px solid #000;border-right:0"></div></div></div><div class="ent" style="top:144px;height:106px"><div class="hdr"><span class="t b">Country</span><div class="chev"><svg style="left:2px;top:1px" width="7" height="9" viewBox="0 0 7 9" shape-rendering="auto"><path d="M0.500 4l3-3 3 3M0.500 8l3-3 3 3" fill="none" stroke="#2a3a9a" stroke-width="1.300"/></svg></div></div><div class="comp"><span class="t">Properties</span></div><div class="mbox"></div><span class="i" style="left:21px;top:64px;width:9px;height:14px"><svg width="9" height="14" viewBox="0 0 9 14" shape-rendering="crispEdges"><g shape-rendering="auto"><path d="M4.500 0.800a3 3 0 0 1 1.200 5.700v6l-1.200 1.200-1.200-1.200v-6a3 3 0 0 1 1.200-5.700z" fill="#f6d050" stroke="#b08a20" stroke-width=".8"/><circle cx="4.500" cy="3" r="1" fill="#fffbe0" stroke="#b08a20" stroke-width=".5"/><path d="M5.700 8h2M5.700 10.500h1.500" stroke="#c89a2a" stroke-width="1.400"/></g></svg></span><span class="i" style="left:33px;top:62px;"><svg width="16" height="16" viewBox="0 0 16 16" shape-rendering="crispEdges"><rect x="0.500" y="5.500" width="11" height="9" fill="#fff" stroke="#7a7f92"/><rect x="1" y="6" width="10" height="2" fill="#a8c0ea"/><path d="M2 10h2M5 10h5M2 12h2M5 12h5" stroke="#8a8ae0"/><path d="M3.500 6.500l4-4.500h4.500l3 1v3.500l-3 2-3-2.500-2.500 1.500z" fill="#f2d444" stroke="#8a7a28" stroke-width=".8" shape-rendering="auto"/><rect x="14.500" y="1" width="1.500" height="4" fill="#2a9a4a"/></svg></span><span class="t " style="left:51px;top:64px;">ID</span><span class="i" style="left:33px;top:78px;"><svg width="16" height="16" viewBox="0 0 16 16" shape-rendering="crispEdges"><rect x="0.500" y="5.500" width="11" height="9" fill="#fff" stroke="#7a7f92"/><rect x="1" y="6" width="10" height="2" fill="#a8c0ea"/><path d="M2 10h2M5 10h5M2 12h2M5 12h5" stroke="#8a8ae0"/><path d="M3.500 6.500l4-4.500h4.500l3 1v3.500l-3 2-3-2.500-2.500 1.500z" fill="#f2d444" stroke="#8a7a28" stroke-width=".8" shape-rendering="auto"/><rect x="14.500" y="1" width="1.500" height="4" fill="#2a9a4a"/></svg></span><span class="t " style="left:51px;top:80px;">Name</span><div class="foot"></div></div><div class="ent" style="top:252px;height:137.5px"><div class="hdr"><span class="t b">AviaCompany</span><div class="chev"><svg style="left:2px;top:1px" width="7" height="9" viewBox="0 0 7 9" shape-rendering="auto"><path d="M0.500 4l3-3 3 3M0.500 8l3-3 3 3" fill="none" stroke="#2a3a9a" stroke-width="1.300"/></svg></div></div><div class="comp"><span class="t">Properties</span></div><div class="mbox"></div><span class="i" style="left:21px;top:64px;width:9px;height:14px"><svg width="9" height="14" viewBox="0 0 9 14" shape-rendering="crispEdges"><g shape-rendering="auto"><path d="M4.500 0.800a3 3 0 0 1 1.200 5.700v6l-1.200 1.200-1.200-1.200v-6a3 3 0 0 1 1.200-5.700z" fill="#f6d050" stroke="#b08a20" stroke-width=".8"/><circle cx="4.500" cy="3" r="1" fill="#fffbe0" stroke="#b08a20" stroke-width=".5"/><path d="M5.700 8h2M5.700 10.500h1.500" stroke="#c89a2a" stroke-width="1.400"/></g></svg></span><span class="i" style="left:33px;top:62px;"><svg width="16" height="16" viewBox="0 0 16 16" shape-rendering="crispEdges"><rect x="0.500" y="5.500" width="11" height="9" fill="#fff" stroke="#7a7f92"/><rect x="1" y="6" width="10" height="2" fill="#a8c0ea"/><path d="M2 10h2M5 10h5M2 12h2M5 12h5" stroke="#8a8ae0"/><path d="M3.500 6.500l4-4.500h4.500l3 1v3.500l-3 2-3-2.500-2.500 1.500z" fill="#f2d444" stroke="#8a7a28" stroke-width=".8" shape-rendering="auto"/><rect x="14.500" y="1" width="1.500" height="4" fill="#2a9a4a"/></svg></span><span class="t " style="left:51px;top:64px;">i</span><span class="i" style="left:33px;top:78px;"><svg width="16" height="16" viewBox="0 0 16 16" shape-rendering="crispEdges"><rect x="0.500" y="5.500" width="11" height="9" fill="#fff" stroke="#7a7f92"/><rect x="1" y="6" width="10" height="2" fill="#a8c0ea"/><path d="M2 10h2M5 10h5M2 12h2M5 12h5" stroke="#8a8ae0"/><path d="M3.500 6.500l4-4.500h4.500l3 1v3.500l-3 2-3-2.500-2.500 1.500z" fill="#f2d444" stroke="#8a7a28" stroke-width=".8" shape-rendering="auto"/><rect x="14.500" y="1" width="1.500" height="4" fill="#2a9a4a"/></svg></span><span class="t " style="left:51px;top:80px;">ID</span><span class="i" style="left:33px;top:94px;"><svg width="16" height="16" viewBox="0 0 16 16" shape-rendering="crispEdges"><rect x="0.500" y="5.500" width="11" height="9" fill="#fff" stroke="#7a7f92"/><rect x="1" y="6" width="10" height="2" fill="#a8c0ea"/><path d="M2 10h2M5 10h5M2 12h2M5 12h5" stroke="#8a8ae0"/><path d="M3.500 6.500l4-4.500h4.500l3 1v3.500l-3 2-3-2.500-2.500 1.500z" fill="#f2d444" stroke="#8a7a28" stroke-width=".8" shape-rendering="auto"/><rect x="14.500" y="1" width="1.500" height="4" fill="#2a9a4a"/></svg></span><span class="t " style="left:51px;top:96px;">Name</span><span class="i" style="left:33px;top:110px;"><svg width="16" height="16" viewBox="0 0 16 16" shape-rendering="crispEdges"><rect x="0.500" y="5.500" width="11" height="9" fill="#fff" stroke="#7a7f92"/><rect x="1" y="6" width="10" height="2" fill="#a8c0ea"/><path d="M2 10h2M5 10h5M2 12h2M5 12h5" stroke="#8a8ae0"/><path d="M3.500 6.500l4-4.500h4.500l3 1v3.500l-3 2-3-2.500-2.500 1.500z" fill="#f2d444" stroke="#8a7a28" stroke-width=".8" shape-rendering="auto"/><rect x="14.500" y="1" width="1.500" height="4" fill="#2a9a4a"/></svg></span><span class="t " style="left:51px;top:112px;">Popular</span><div class="foot"></div></div><div class="ent" style="top:396px;height:137.5px"><div class="hdr"><span class="t b">City</span><div class="chev"><svg style="left:2px;top:1px" width="7" height="9" viewBox="0 0 7 9" shape-rendering="auto"><path d="M0.500 4l3-3 3 3M0.500 8l3-3 3 3" fill="none" stroke="#2a3a9a" stroke-width="1.300"/></svg></div></div><div class="comp"><span class="t">Properties</span></div><div class="mbox"></div><span class="i" style="left:21px;top:64px;width:9px;height:14px"><svg width="9" height="14" viewBox="0 0 9 14" shape-rendering="crispEdges"><g shape-rendering="auto"><path d="M4.500 0.800a3 3 0 0 1 1.200 5.700v6l-1.200 1.200-1.200-1.200v-6a3 3 0 0 1 1.200-5.700z" fill="#f6d050" stroke="#b08a20" stroke-width=".8"/><circle cx="4.500" cy="3" r="1" fill="#fffbe0" stroke="#b08a20" stroke-width=".5"/><path d="M5.700 8h2M5.700 10.500h1.500" stroke="#c89a2a" stroke-width="1.400"/></g></svg></span><span class="i" style="left:33px;top:62px;"><svg width="16" height="16" viewBox="0 0 16 16" shape-rendering="crispEdges"><rect x="0.500" y="5.500" width="11" height="9" fill="#fff" stroke="#7a7f92"/><rect x="1" y="6" width="10" height="2" fill="#a8c0ea"/><path d="M2 10h2M5 10h5M2 12h2M5 12h5" stroke="#8a8ae0"/><path d="M3.500 6.500l4-4.500h4.500l3 1v3.500l-3 2-3-2.500-2.500 1.500z" fill="#f2d444" stroke="#8a7a28" stroke-width=".8" shape-rendering="auto"/><rect x="14.500" y="1" width="1.500" height="4" fill="#2a9a4a"/></svg></span><span class="t " style="left:51px;top:64px;">i</span><span class="i" style="left:33px;top:78px;"><svg width="16" height="16" viewBox="0 0 16 16" shape-rendering="crispEdges"><rect x="0.500" y="5.500" width="11" height="9" fill="#fff" stroke="#7a7f92"/><rect x="1" y="6" width="10" height="2" fill="#a8c0ea"/><path d="M2 10h2M5 10h5M2 12h2M5 12h5" stroke="#8a8ae0"/><path d="M3.500 6.500l4-4.500h4.500l3 1v3.500l-3 2-3-2.500-2.500 1.500z" fill="#f2d444" stroke="#8a7a28" stroke-width=".8" shape-rendering="auto"/><rect x="14.500" y="1" width="1.500" height="4" fill="#2a9a4a"/></svg></span><span class="t " style="left:51px;top:80px;">ID</span><span class="i" style="left:33px;top:94px;"><svg width="16" height="16" viewBox="0 0 16 16" shape-rendering="crispEdges"><rect x="0.500" y="5.500" width="11" height="9" fill="#fff" stroke="#7a7f92"/><rect x="1" y="6" width="10" height="2" fill="#a8c0ea"/><path d="M2 10h2M5 10h5M2 12h2M5 12h5" stroke="#8a8ae0"/><path d="M3.500 6.500l4-4.500h4.500l3 1v3.500l-3 2-3-2.500-2.500 1.500z" fill="#f2d444" stroke="#8a7a28" stroke-width=".8" shape-rendering="auto"/><rect x="14.500" y="1" width="1.500" height="4" fill="#2a9a4a"/></svg></span><span class="t " style="left:51px;top:96px;">Name</span><span class="i" style="left:33px;top:110px;"><svg width="16" height="16" viewBox="0 0 16 16" shape-rendering="crispEdges"><rect x="0.500" y="5.500" width="11" height="9" fill="#fff" stroke="#7a7f92"/><rect x="1" y="6" width="10" height="2" fill="#a8c0ea"/><path d="M2 10h2M5 10h5M2 12h2M5 12h5" stroke="#8a8ae0"/><path d="M3.500 6.500l4-4.500h4.500l3 1v3.500l-3 2-3-2.500-2.500 1.500z" fill="#f2d444" stroke="#8a7a28" stroke-width=".8" shape-rendering="auto"/><rect x="14.500" y="1" width="1.500" height="4" fill="#2a9a4a"/></svg></span><span class="t " style="left:51px;top:112px;">ToCountry</span><div class="foot"></div></div><div class="ent" style="top:540px;height:153px"><div class="hdr"><span class="t b">Airport</span><div class="chev"><svg style="left:2px;top:1px" width="7" height="9" viewBox="0 0 7 9" shape-rendering="auto"><path d="M0.500 4l3-3 3 3M0.500 8l3-3 3 3" fill="none" stroke="#2a3a9a" stroke-width="1.300"/></svg></div></div><div class="comp"><span class="t">Properties</span></div><div class="mbox"></div><span class="i" style="left:21px;top:64px;width:9px;height:14px"><svg width="9" height="14" viewBox="0 0 9 14" shape-rendering="crispEdges"><g shape-rendering="auto"><path d="M4.500 0.800a3 3 0 0 1 1.200 5.700v6l-1.200 1.200-1.200-1.200v-6a3 3 0 0 1 1.200-5.700z" fill="#f6d050" stroke="#b08a20" stroke-width=".8"/><circle cx="4.500" cy="3" r="1" fill="#fffbe0" stroke="#b08a20" stroke-width=".5"/><path d="M5.700 8h2M5.700 10.500h1.500" stroke="#c89a2a" stroke-width="1.400"/></g></svg></span><span class="i" style="left:33px;top:62px;"><svg width="16" height="16" viewBox="0 0 16 16" shape-rendering="crispEdges"><rect x="0.500" y="5.500" width="11" height="9" fill="#fff" stroke="#7a7f92"/><rect x="1" y="6" width="10" height="2" fill="#a8c0ea"/><path d="M2 10h2M5 10h5M2 12h2M5 12h5" stroke="#8a8ae0"/><path d="M3.500 6.500l4-4.500h4.500l3 1v3.500l-3 2-3-2.500-2.500 1.500z" fill="#f2d444" stroke="#8a7a28" stroke-width=".8" shape-rendering="auto"/><rect x="14.500" y="1" width="1.500" height="4" fill="#2a9a4a"/></svg></span><span class="t " style="left:51px;top:64px;">i</span><span class="i" style="left:33px;top:78px;"><svg width="16" height="16" viewBox="0 0 16 16" shape-rendering="crispEdges"><rect x="0.500" y="5.500" width="11" height="9" fill="#fff" stroke="#7a7f92"/><rect x="1" y="6" width="10" height="2" fill="#a8c0ea"/><path d="M2 10h2M5 10h5M2 12h2M5 12h5" stroke="#8a8ae0"/><path d="M3.500 6.500l4-4.500h4.500l3 1v3.500l-3 2-3-2.500-2.500 1.500z" fill="#f2d444" stroke="#8a7a28" stroke-width=".8" shape-rendering="auto"/><rect x="14.500" y="1" width="1.500" height="4" fill="#2a9a4a"/></svg></span><span class="t " style="left:51px;top:80px;">ID</span><span class="i" style="left:33px;top:94px;"><svg width="16" height="16" viewBox="0 0 16 16" shape-rendering="crispEdges"><rect x="0.500" y="5.500" width="11" height="9" fill="#fff" stroke="#7a7f92"/><rect x="1" y="6" width="10" height="2" fill="#a8c0ea"/><path d="M2 10h2M5 10h5M2 12h2M5 12h5" stroke="#8a8ae0"/><path d="M3.500 6.500l4-4.500h4.500l3 1v3.500l-3 2-3-2.500-2.500 1.500z" fill="#f2d444" stroke="#8a7a28" stroke-width=".8" shape-rendering="auto"/><rect x="14.500" y="1" width="1.500" height="4" fill="#2a9a4a"/></svg></span><span class="t " style="left:51px;top:96px;">Name</span><span class="i" style="left:33px;top:110px;"><svg width="16" height="16" viewBox="0 0 16 16" shape-rendering="crispEdges"><rect x="0.500" y="5.500" width="11" height="9" fill="#fff" stroke="#7a7f92"/><rect x="1" y="6" width="10" height="2" fill="#a8c0ea"/><path d="M2 10h2M5 10h5M2 12h2M5 12h5" stroke="#8a8ae0"/><path d="M3.500 6.500l4-4.500h4.500l3 1v3.500l-3 2-3-2.500-2.500 1.500z" fill="#f2d444" stroke="#8a7a28" stroke-width=".8" shape-rendering="auto"/><rect x="14.500" y="1" width="1.500" height="4" fill="#2a9a4a"/></svg></span><span class="t " style="left:51px;top:112px;">Popular</span><span class="i" style="left:33px;top:125px;"><svg width="16" height="16" viewBox="0 0 16 16" shape-rendering="crispEdges"><rect x="0.500" y="5.500" width="11" height="9" fill="#fff" stroke="#7a7f92"/><rect x="1" y="6" width="10" height="2" fill="#a8c0ea"/><path d="M2 10h2M5 10h5M2 12h2M5 12h5" stroke="#8a8ae0"/><path d="M3.500 6.500l4-4.500h4.500l3 1v3.500l-3 2-3-2.500-2.500 1.500z" fill="#f2d444" stroke="#8a7a28" stroke-width=".8" shape-rendering="auto"/><rect x="14.500" y="1" width="1.500" height="4" fill="#2a9a4a"/></svg></span><span class="t " style="left:51px;top:127px;">ToCountry</span><div class="foot"></div></div><svg style="left:232px;top:295px" width="24" height="34" viewBox="0 0 24 34"><rect x="2.500" y="16.500" width="12" height="9" fill="none" stroke="#000" stroke-dasharray="1 1"/><path d="M0.500 0.500v14.500l3.200-3.200 2.600 6.200 2-.900-2.600-6 4.800-.300z" fill="#fff" stroke="#000" stroke-width="1" shape-rendering="auto"/><rect x="10.500" y="20.500" width="10" height="10" fill="#fff" stroke="#000" stroke-width="1.400"/><path d="M13 25.500h5M15.500 23v5" stroke="#000"/></svg><span class="t" style="left:635px;top:467px;color:#808080;letter-spacing:-0.05px">Create methods by dragging items from <span style="color:#0000ff;text-decoration:underline">Server Explorer</span> onto this design surface.</span>
<div class="panel" style="left:211px;top:862px;width:852px;height:61px;--bg:#fff"><div class="ptitle"><span class="t">Find Results 2</span><div class="dd" style="left:808px;top:8px;border-width:4px 4px 0;border-top-color:#fff"></div><svg style="left:824px;top:4px" width="9" height="11" viewBox="0 0 9 11"><path d="M2.500 0.500h4v5h-4zM0.500 6h8M4.500 6v5" fill="none" stroke="#fff" stroke-width="1"/><path d="M5.500 1v5" stroke="#fff"/></svg><svg style="left:838px;top:5px" width="10" height="9" viewBox="0 0 10 9" shape-rendering="auto"><path d="M1 0.500l8 8M9 0.500l-8 8" stroke="#fff" stroke-width="1.500"/></svg></div><div class="ptool" style="height:26px"><span class="i" style="left:7px;top:5px;"><svg width="16" height="16" viewBox="0 0 16 16" shape-rendering="crispEdges"><path d="M3.500 1.500h6l2 2v7h-8z" fill="#d4d8e2" stroke="#9aa3b4"/><path d="M5 4h4M5 6h4" stroke="#9aa3b4"/><path d="M7.500 15v-5h-3l3.500-4 3.500 4h-3v5z" fill="#b4bac8" stroke="#9aa3b4" stroke-width=".8" shape-rendering="auto"/></svg></span><span class="i" style="left:36px;top:5px;"><svg width="16" height="16" viewBox="0 0 16 16" shape-rendering="crispEdges"><path d="M7.500 1.500h5l2 2v8h-7z" fill="#d4d8e2" stroke="#9aa3b4"/><path d="M9 5h4M9 7h4" stroke="#9aa3b4"/><path d="M1 10.500l5-4.500v3h5v3h-5v3z" fill="#b4bac8" stroke="#9aa3b4" stroke-width=".8" shape-rendering="auto"/></svg></span><span class="i" style="left:58px;top:5px;"><svg width="16" height="16" viewBox="0 0 16 16" shape-rendering="crispEdges"><path d="M1.500 1.500h5l2 2v8h-7z" fill="#d4d8e2" stroke="#9aa3b4"/><path d="M3 5h4M3 7h4" stroke="#9aa3b4"/><path d="M15 10.500l-5-4.500v3h-5v3h5v3z" fill="#b4bac8" stroke="#9aa3b4" stroke-width=".8" shape-rendering="auto"/></svg></span><span class="i" style="left:87px;top:5px;"><svg width="16" height="16" viewBox="0 0 16 16" shape-rendering="crispEdges"><path d="M2 3h10M1 5h10M2 7h8M1 9h6" stroke="#b4bac8"/><path d="M7 6l7 8M14 6l-7 8" stroke="#9aa3b4" stroke-width="1.800" shape-rendering="auto"/></svg></span><span class="i" style="left:116px;top:5px;"><svg width="16" height="16" viewBox="0 0 16 16" shape-rendering="crispEdges"><g shape-rendering="auto"><rect x="1.500" y="3" width="4" height="8" rx="1" fill="#9aa3b4"/><rect x="7.500" y="3" width="4" height="8" rx="1" fill="#9aa3b4"/><rect x="2.500" y="1" width="2" height="3" fill="#b4bac8"/><rect x="8.500" y="1" width="2" height="3" fill="#b4bac8"/><rect x="5" y="5" width="3" height="3" fill="#b4bac8"/></g><rect x="8.500" y="8.500" width="7" height="7" fill="#d4d8e2" stroke="#9aa3b4"/><path d="M10.500 10.500l3 3M13.500 10.500l-3 3" stroke="#9aa3b4" stroke-width="1.200" shape-rendering="auto"/></svg></span><div class="sep" style="left:29px;top:4px;height:18px"></div><div class="sep" style="left:80px;top:4px;height:18px"></div><div class="sep" style="left:109px;top:4px;height:18px"></div></div><div class="sb" style="left:0;top:45px;width:836px;height:16px"><div class="sbtn" style="left:0;top:0;height:16px"><div class="arr" style="left:4px;top:4px;border-right:4px solid #888;border-left:0"></div></div><div class="sbtn" style="left:820px;top:0;height:16px"><div class="arr" style="left:6px;top:4px;border-left:4px solid #888;border-right:0"></div></div></div></div><div class="btab" style="left:211px;top:924px;width:70px"><span class="i" style="left:5px;top:2px;"><svg width="16" height="16" viewBox="0 0 16 16" shape-rendering="crispEdges"><rect x="2.500" y="2.500" width="9" height="11" fill="#f4f4f4" stroke="#9aa3b4"/><rect x="5" y="1" width="4" height="3" fill="#c8a040"/><circle cx="11" cy="11" r="3.500" fill="#e03020" shape-rendering="auto"/><path d="M9.500 9.500l3 3M12.500 9.500l-3 3" stroke="#fff" shape-rendering="auto"/></svg></span><span class="t " style="left:24px;top:3px;">Error List</span></div><div class="btab" style="left:284px;top:924px;width:120px"><span class="i" style="left:5px;top:2px;"><svg width="16" height="16" viewBox="0 0 16 16" shape-rendering="crispEdges"><rect x="3.500" y="2.500" width="12" height="10" fill="#fff" stroke="#5a7ab8"/><rect x="4" y="3" width="11" height="2" fill="#4f86dc"/><path d="M6 8h7M6 10h5" stroke="#6a8fd8"/><path d="M1.500 6v5M1.500 13v1" stroke="#e02010" stroke-width="1.600"/></svg></span><span class="t " style="left:24px;top:3px;">Immediate Window</span></div><div class="btab" style="left:406px;top:924px;width:60px"><span class="i" style="left:5px;top:2px;"><svg width="16" height="16" viewBox="0 0 16 16" shape-rendering="crispEdges"><rect x="2.500" y="2.500" width="12" height="11" fill="#fff" stroke="#5a7ab8"/><rect x="3" y="3" width="11" height="2" fill="#4f86dc"/><path d="M5 7h7M5 9h7M5 11h7" stroke="#4a6ab8"/></svg></span><span class="t " style="left:24px;top:3px;">Output</span></div><div class="btab act" style="left:469px;top:922px;width:97px;height:21px"><span class="i" style="left:5px;top:3px;"><svg width="16" height="16" viewBox="0 0 16 16" shape-rendering="crispEdges"><rect x="1.500" y="1.500" width="12" height="9" fill="#fff" stroke="#5a7ab8"/><rect x="2" y="2" width="11" height="2" fill="#4f86dc"/><path d="M3 6h8M3 8h6" stroke="#6a8fd8"/><g shape-rendering="auto"><circle cx="9" cy="10" r="1.800" fill="#333"/><circle cx="13" cy="10" r="1.800" fill="#333"/><rect x="7.500" y="11" width="7" height="4" fill="#444"/></g></svg></span><span class="t " style="left:24px;top:5px;">Find Results 2</span></div>
<div class="panel" style="left:1069px;top:72px;width:205px;height:482px"><div class="ptitle"><span class="t">Solution Explorer</span><div class="dd" style="left:161px;top:8px;border-width:4px 4px 0;border-top-color:#fff"></div><svg style="left:177px;top:4px" width="9" height="11" viewBox="0 0 9 11"><path d="M2.500 0.500h4v5h-4zM0.500 6h8M4.500 6v5" fill="none" stroke="#fff" stroke-width="1"/><path d="M5.500 1v5" stroke="#fff"/></svg><svg style="left:191px;top:5px" width="10" height="9" viewBox="0 0 10 9" shape-rendering="auto"><path d="M1 0.500l8 8M9 0.500l-8 8" stroke="#fff" stroke-width="1.500"/></svg></div><div class="ptool"><span class="i" style="left:7px;top:5px;"><svg width="16" height="16" viewBox="0 0 16 16" shape-rendering="crispEdges"><path d="M0.500 2.500h4l1 1h4v7h-9z" fill="#f4e8b8" stroke="#a89a6a"/><path d="M2 5h6M2 7h6" stroke="#c8b888"/><rect x="4.500" y="7.500" width="11" height="7" fill="#fff" stroke="#3a4a88"/><rect x="5" y="8" width="10" height="1" fill="#6a86c8"/><path d="M6 10.500h3M10 10.500h4M6 12.500h3M10 12.500h4" stroke="#4a5a98"/></svg></span><div class="sep" style="left:29px;top:4px;height:18px"></div><span class="i" style="left:36px;top:5px;"><svg width="16" height="16" viewBox="0 0 16 16" shape-rendering="crispEdges"><rect x="1.5" y="1.5" width="13" height="12" fill="#fff" stroke="#5a7ab8"/><rect x="2" y="2" width="12" height="2" fill="#3f7ad8"/><g shape-rendering="auto"><path d="M5 8.500A3 3 0 0 1 10.400 6.800" fill="none" stroke="#3aa82a" stroke-width="1.600"/><path d="M11 8.500A3 3 0 0 1 5.600 10.200" fill="none" stroke="#3aa82a" stroke-width="1.600"/><path d="M12 4.600v3.400h-3.400z" fill="#3aa82a"/><path d="M4 12.400v-3.400h3.400z" fill="#3aa82a"/></g></svg></span><div class="a" style="left:55px;top:2px;width:22px;height:22px;background:#ffe8a6;border:1px solid #e5c365"></div><span class="i" style="left:58px;top:5px;"><svg width="16" height="16" viewBox="0 0 16 16" shape-rendering="crispEdges"><path d="M1.500 0.500h4l2 2v6h-6z" fill="#fff" stroke="#3a4a78"/><path d="M3 4h3M3 6h3" stroke="#4f86dc"/><path d="M8.500 6.500h4l2 2v6h-6z" fill="#fff" stroke="#3a4a78"/><path d="M10 10h3M10 12h3" stroke="#4f86dc"/><g shape-rendering="auto"><path d="M3 9.500v1.500a2 2 0 0 0 2 2h1" fill="none" stroke="#1a2ab8" stroke-width="1.500"/><path d="M5.500 10.500l3 2.500-3 2.500z" fill="#1a2ab8"/></g></svg></span><div class="sep" style="left:80px;top:4px;height:18px"></div><span class="i" style="left:87px;top:5px;"><svg width="16" height="16" viewBox="0 0 16 16" shape-rendering="crispEdges"><g shape-rendering="auto"><rect x="4.500" y="0.500" width="6" height="3" rx="1" fill="#cfe0f8" stroke="#5a7ab8"/><rect x="0.500" y="8.500" width="5" height="3" rx="1" fill="#cfe0f8" stroke="#5a7ab8"/><path d="M7 4v2H3v2" fill="none" stroke="#5a7ab8"/><circle cx="9" cy="8.500" r="3.300" fill="#f4f8ff" stroke="#8a94a8" stroke-width="1.200"/><path d="M11.500 11l2.500 2.500" stroke="#d88a2a" stroke-width="2.200" stroke-linecap="round"/></g></svg></span><div class="sep" style="left:109px;top:4px;height:18px"></div><span class="i" style="left:116px;top:5px;"><svg width="16" height="16" viewBox="0 0 16 16" shape-rendering="crispEdges"><rect x="0.500" y="1.500" width="10" height="10" fill="#e8e4dc" stroke="#4a4640"/><rect x="1" y="2" width="9" height="2" fill="#5a564e"/><rect x="4.500" y="4.500" width="11" height="10" fill="#fff" stroke="#2a4a98"/><rect x="5" y="5" width="10" height="2" fill="#3f6ad0"/><g shape-rendering="auto"><circle cx="10" cy="10.500" r="2.800" fill="#2a7ad8"/><path d="M8.500 9.500l2-.500 1.500 1.500-1.500 2-2-1z" fill="#38b838"/></g></svg></span><span class="i" style="left:138px;top:5px;"><svg width="16" height="16" viewBox="0 0 16 16" shape-rendering="crispEdges"><g shape-rendering="auto"><circle cx="10" cy="8.500" r="5.500" fill="#2a7ad8"/><path d="M7 5l4-1 3 3-1 4-4 2-2-3z" fill="#38b838"/><path d="M3.500 5v9" stroke="#d02818" stroke-width="3.200" stroke-linecap="round"/><path d="M0.500 3c2-2 5-2 7 0l-1 2h-5z" fill="#8a8a92" stroke="#4a4a52" stroke-width=".6"/></g></svg></span></div><span class="i" style="left:12px;top:46px;"><svg width="16" height="16" viewBox="0 0 16 16" shape-rendering="crispEdges"><circle cx="10" cy="6" r="5.500" fill="#2a8fd8" shape-rendering="auto"/><path d="M7 3l4 1 2 4-3 2-3-2z" fill="#38b838" shape-rendering="auto"/><rect x="1.500" y="7.500" width="8" height="7" fill="#eef2fb" stroke="#5a7ab8"/><path d="M3 10h5M3 12h5" stroke="#6a8fd8"/></svg></span><div class="a" style="left:31px;top:46px;width:76px;height:16px;background:#d4d0c8"></div><span class="t b" style="left:33px;top:47px;letter-spacing:0.25px">G:\...\DAVS\</span><div class="vd" style="left:12px;top:75px;height:187px"></div><div class="vd" style="left:31px;top:78px;height:56px"></div><div class="vd" style="left:50px;top:94px;height:24px"></div><div class="vd" style="left:31px;top:174px;height:8px"></div><div class="vd" style="left:31px;top:206px;height:8px"></div><div class="vd" style="left:31px;top:238px;height:8px"></div><div class="hd" style="left:18px;top:70px;width:6px"></div><div class="exp " style="left:8px;top:66px"></div><span class="i" style="left:31px;top:62px;"><svg width="16" height="16" viewBox="0 0 16 16" shape-rendering="crispEdges"><path d="M0.500 3.500l1-1h4l1 1.500h6v9h-12z" fill="#e4e4e4" stroke="#9a9a9a" shape-rendering="auto"/><path d="M3.500 7.500h12l-2.500 6h-12z" fill="#f0f0f0" stroke="#8a8a8a" shape-rendering="auto"/><path d="M1 13.500h12" stroke="#5a5a5a"/></svg></span><span class="t " style="left:52px;top:63px;">App_Code</span><div class="hd" style="left:37px;top:86px;width:6px"></div><div class="exp " style="left:27px;top:82px"></div><span class="i" style="left:50px;top:78px;"><svg width="16" height="16" viewBox="0 0 16 16" shape-rendering="crispEdges"><path d="M2.500 0.500h8l3 3v10h-11z" fill="#eef4ff" stroke="#4a6ab8" shape-rendering="auto"/><g shape-rendering="auto"><path d="M6 3v4a2 1 0 0 0 4 0V3z" fill="#eab83c" stroke="#a8842a" stroke-width=".6"/><ellipse cx="8" cy="3" rx="2" ry="1" fill="#f8e08a" stroke="#a8842a" stroke-width=".6"/><path d="M5 4l-1.500 1.500L5 7M11 4l1.500 1.500L11 7" fill="none" stroke="#2a58d8" stroke-width=".9"/></g><path d="M5 10h6M5 12h5" stroke="#5a88e0"/><g shape-rendering="auto"><rect x="9.500" y="9.500" width="6" height="6" rx="1.500" fill="#38b838" stroke="#1a8a1a" stroke-width=".6"/><path d="M11 11l3 3-3 0z" fill="#e8ffe8"/></g></svg></span><span class="t " style="left:71px;top:79px;">AviaDB.dbml</span><div class="hd" style="left:50px;top:102px;width:11px"></div><span class="i" style="left:69px;top:94px;"><svg width="16" height="16" viewBox="0 0 16 16" shape-rendering="crispEdges"><path d="M3.500 2.500h7l3 3v9h-10z" fill="#f4f8ff" stroke="#4a6ab8" shape-rendering="auto"/><path d="M10.500 2.500v3h3" fill="#c8d8f4" stroke="#4a6ab8" shape-rendering="auto"/><path d="M7 8h5M6 10h6M6 12h6" stroke="#5a88e0"/><path d="M4 14.500h10" stroke="#2a4a98"/><g shape-rendering="auto"><path d="M1 1.500c0 3 1.500 4.500 4 4.500" fill="none" stroke="#2a68e0" stroke-width="1.600"/><path d="M4.500 3.500l3.500 2.500-3.500 2.500z" fill="#2a68e0"/></g></svg></span><span class="t " style="left:90px;top:95px;">AviaDB.dbml.layout</span><div class="hd" style="left:50px;top:118px;width:11px"></div><span class="i" style="left:69px;top:110px;"><svg width="16" height="16" viewBox="0 0 16 16" shape-rendering="crispEdges"><path d="M3.500 2.500h7l3 3v9h-10z" fill="#f4f8ff" stroke="#4a6ab8" shape-rendering="auto"/><path d="M10.500 2.500v3h3" fill="#c8d8f4" stroke="#4a6ab8" shape-rendering="auto"/><path d="M7 8h5M6 10h6M6 12h6" stroke="#5a88e0"/><path d="M4 14.500h10" stroke="#2a4a98"/><g shape-rendering="auto"><path d="M1 1.500c0 3 1.500 4.500 4 4.500" fill="none" stroke="#2a68e0" stroke-width="1.600"/><path d="M4.500 3.500l3.500 2.500-3.500 2.500z" fill="#2a68e0"/></g></svg></span><span class="t " style="left:90px;top:111px;">AviaDB.designer.vb</span><div class="hd" style="left:31px;top:134px;width:11px"></div><span class="i" style="left:50px;top:126px;"><svg width="16" height="16" viewBox="0 0 16 16" shape-rendering="crispEdges"><path d="M3.500 2.500h7l3 3v9h-10z" fill="#f4f8ff" stroke="#4a6ab8" shape-rendering="auto"/><path d="M10.500 2.500v3h3" fill="#c8d8f4" stroke="#4a6ab8" shape-rendering="auto"/><path d="M7 8h5M6 10h6M6 12h6" stroke="#5a88e0"/><path d="M4 14.500h10" stroke="#2a4a98"/><text x="0" y="7" font-size="7" font-weight="bold" fill="#1a58d8" font-family="Liberation Sans,sans-serif" letter-spacing="-0.5">VB</text></svg></span><span class="t " style="left:71px;top:127px;">Wcf_Client.vb</span><div class="hd" style="left:12px;top:150px;width:11px"></div><span class="i" style="left:31px;top:142px;"><svg width="16" height="16" viewBox="0 0 16 16" shape-rendering="crispEdges"><path d="M0.500 3.500l1-1h4l1 1.500h8v9h-14z" fill="#e8e8e8" stroke="#a8a8a8" shape-rendering="auto"/><path d="M1 13.500h14" stroke="#6a6a6a"/><g shape-rendering="auto"><circle cx="11.500" cy="11" r="3.600" fill="#5058d0"/><circle cx="11.500" cy="11" r="1.300" fill="#f0f0ff"/><path d="M11.500 6.500v9M7 11h9M8.300 7.800l6.400 6.400M14.700 7.800l-6.400 6.400" stroke="#5058d0" stroke-width="1.300"/><circle cx="11.500" cy="11" r="1.300" fill="#f0f0ff"/></g></svg></span><span class="t " style="left:52px;top:143px;">Bin</span><div class="hd" style="left:18px;top:166px;width:6px"></div><div class="exp " style="left:8px;top:162px"></div><span class="i" style="left:31px;top:158px;"><svg width="16" height="16" viewBox="0 0 16 16" shape-rendering="crispEdges"><rect x="2.500" y="1.500" width="13" height="13" fill="#fff6c8" stroke="#c8a850"/><rect x="3" y="11" width="12" height="3" fill="#f8dc80"/><rect x="3" y="2" width="12" height="1.500" fill="#5a88e0"/><path d="M4 6h2M4 9h2M4 12h2" stroke="#d85a28"/><path d="M7 5.500h6M8 8.500h5M8 11.500h5" stroke="#4a5a98"/><path d="M8.500 4v9" stroke="#8a9ac8"/></svg></span><span class="t " style="left:52px;top:159px;">Admin.aspx</span><div class="hd" style="left:31px;top:182px;width:11px"></div><span class="i" style="left:50px;top:174px;"><svg width="16" height="16" viewBox="0 0 16 16" shape-rendering="crispEdges"><path d="M3.500 2.500h7l3 3v9h-10z" fill="#f4f8ff" stroke="#4a6ab8" shape-rendering="auto"/><path d="M10.500 2.500v3h3" fill="#c8d8f4" stroke="#4a6ab8" shape-rendering="auto"/><path d="M7 8h5M6 10h6M6 12h6" stroke="#5a88e0"/><path d="M4 14.500h10" stroke="#2a4a98"/><g shape-rendering="auto"><path d="M1 1.500c0 3 1.500 4.500 4 4.500" fill="none" stroke="#2a68e0" stroke-width="1.600"/><path d="M4.500 3.500l3.500 2.500-3.500 2.500z" fill="#2a68e0"/></g></svg></span><span class="t " style="left:71px;top:175px;">Admin.aspx.vb</span><div class="hd" style="left:18px;top:198px;width:6px"></div><div class="exp " style="left:8px;top:194px"></div><span class="i" style="left:31px;top:190px;"><svg width="16" height="16" viewBox="0 0 16 16" shape-rendering="crispEdges"><rect x="2.500" y="1.500" width="13" height="13" fill="#fff6c8" stroke="#c8a850"/><rect x="3" y="11" width="12" height="3" fill="#f8dc80"/><rect x="3" y="2" width="12" height="1.500" fill="#5a88e0"/><path d="M4 6h2M4 9h2M4 12h2" stroke="#d85a28"/><path d="M7 5.500h6M8 8.500h5M8 11.500h5" stroke="#4a5a98"/><path d="M8.500 4v9" stroke="#8a9ac8"/></svg></span><span class="t " style="left:52px;top:191px;">Default.aspx</span><div class="hd" style="left:31px;top:214px;width:11px"></div><span class="i" style="left:50px;top:206px;"><svg width="16" height="16" viewBox="0 0 16 16" shape-rendering="crispEdges"><path d="M3.500 2.500h7l3 3v9h-10z" fill="#f4f8ff" stroke="#4a6ab8" shape-rendering="auto"/><path d="M10.500 2.500v3h3" fill="#c8d8f4" stroke="#4a6ab8" shape-rendering="auto"/><path d="M7 8h5M6 10h6M6 12h6" stroke="#5a88e0"/><path d="M4 14.500h10" stroke="#2a4a98"/><g shape-rendering="auto"><path d="M1 1.500c0 3 1.500 4.500 4 4.500" fill="none" stroke="#2a68e0" stroke-width="1.600"/><path d="M4.500 3.500l3.500 2.500-3.500 2.500z" fill="#2a68e0"/></g></svg></span><span class="t " style="left:71px;top:207px;">Default.aspx.vb</span><div class="hd" style="left:18px;top:230px;width:6px"></div><div class="exp " style="left:8px;top:226px"></div><span class="i" style="left:31px;top:222px;"><svg width="16" height="16" viewBox="0 0 16 16" shape-rendering="crispEdges"><rect x="2.500" y="1.500" width="13" height="13" fill="#fff6c8" stroke="#c8a850"/><rect x="3" y="11" width="12" height="3" fill="#f8dc80"/><rect x="3" y="2" width="12" height="1.500" fill="#5a88e0"/><path d="M4 6h2M4 9h2M4 12h2" stroke="#d85a28"/><path d="M7 5.500h6M8 8.500h5M8 11.500h5" stroke="#4a5a98"/><path d="M8.500 4v9" stroke="#8a9ac8"/></svg></span><span class="t " style="left:52px;top:223px;">ShowResult.aspx</span><div class="hd" style="left:31px;top:246px;width:11px"></div><span class="i" style="left:50px;top:238px;"><svg width="16" height="16" viewBox="0 0 16 16" shape-rendering="crispEdges"><path d="M3.500 2.500h7l3 3v9h-10z" fill="#f4f8ff" stroke="#4a6ab8" shape-rendering="auto"/><path d="M10.500 2.500v3h3" fill="#c8d8f4" stroke="#4a6ab8" shape-rendering="auto"/><path d="M7 8h5M6 10h6M6 12h6" stroke="#5a88e0"/><path d="M4 14.500h10" stroke="#2a4a98"/><g shape-rendering="auto"><path d="M1 1.500c0 3 1.500 4.500 4 4.500" fill="none" stroke="#2a68e0" stroke-width="1.600"/><path d="M4.500 3.500l3.500 2.500-3.500 2.500z" fill="#2a68e0"/></g></svg></span><span class="t " style="left:71px;top:239px;">ShowResult.aspx.vb</span><div class="hd" style="left:12px;top:262px;width:11px"></div><span class="i" style="left:31px;top:254px;"><svg width="16" height="16" viewBox="0 0 16 16" shape-rendering="crispEdges"><path d="M2.500 1.500h7l3 3v10h-10z" fill="#f4f8ff" stroke="#4a6ab8" shape-rendering="auto"/><path d="M4 6h6M4 8h6M4 10h4M4 12h3" stroke="#5a88e0"/><g shape-rendering="auto"><circle cx="11.500" cy="11.500" r="3.500" fill="#2a7ad8"/><path d="M9.500 10l2.500-1 2 2-1 2.500-2.500.500z" fill="#38b838"/></g></svg></span><span class="t " style="left:52px;top:255px;">web.config</span></div><div class="btab act" style="left:1069px;top:554px;width:68px;height:20px"><span class="i" style="left:5px;top:2px;"><svg width="16" height="16" viewBox="0 0 16 16" shape-rendering="crispEdges"><rect x="5.5" y="1.5" width="9" height="8" fill="#eaf1fc" stroke="#5a7ab8"/><rect x="6" y="2" width="8" height="2" fill="#3f7ad8"/><path d="M1 4h4l1 1h4v6H1z" fill="#f2c84a" stroke="#b08a2a" stroke-width=".8" shape-rendering="auto"/><g shape-rendering="auto"><path d="M11.1 11.1l3.2 3.2" stroke="#c8922a" stroke-width="2.200" stroke-linecap="round"/><circle cx="9" cy="9" r="3" fill="#dff0ff" stroke="#6a86b0" stroke-width="1.200"/></g></svg></span><span class="t " style="left:24px;top:4px;">Soluti...</span></div><div class="btab" style="left:1137px;top:555px;width:68px;height:19px"><span class="i" style="left:5px;top:1px;"><svg width="16" height="16" viewBox="0 0 16 16" shape-rendering="crispEdges"><rect x="1.5" y="1.5" width="11" height="10" fill="#fff" stroke="#5a7ab8"/><rect x="2" y="2" width="10" height="2" fill="#3f7ad8"/><g shape-rendering="auto"><circle cx="7" cy="8" r="1.500" fill="#2a5fd0"/><rect x="5.500" y="9.500" width="3" height="6" rx="1" fill="#2a5fd0"/><circle cx="10.500" cy="7" r="1.500" fill="#2aa02a"/><rect x="9" y="8.500" width="3" height="7" rx="1" fill="#2aa02a"/><circle cx="14" cy="8" r="1.500" fill="#d82a2a"/><rect x="12.500" y="9.500" width="3" height="6" rx="1" fill="#d82a2a"/></g></svg></span><span class="t " style="left:24px;top:3px;">Team...</span></div><div class="btab" style="left:1206px;top:555px;width:68px;height:19px"><span class="i" style="left:5px;top:1px;"><svg width="16" height="16" viewBox="0 0 16 16" shape-rendering="crispEdges"><g shape-rendering="auto"><path d="M1 4l5-3 5 2.500-5 3z" fill="#f0c840" stroke="#8a6a18" stroke-width=".8"/><path d="M8 7.500l3.500-2 3.500 2-3.500 2z" fill="#d070d8" stroke="#80308a" stroke-width=".8"/><path d="M9 12l2.500-1.500 2.500 1.500-2.500 1.500z" fill="#4f9ae8" stroke="#2a5aa8" stroke-width=".6"/><rect x="1.500" y="2.500" width="9" height="8" fill="none" stroke="#c8d0e0" stroke-width=".8"/></g></svg></span><span class="t " style="left:24px;top:3px;">Class...</span></div>
<div class="panel" style="left:1069px;top:580px;width:205px;height:362px"><div class="ptitle"><span class="t">Properties</span><div class="dd" style="left:161px;top:8px;border-width:4px 4px 0;border-top-color:#fff"></div><svg style="left:177px;top:4px" width="9" height="11" viewBox="0 0 9 11"><path d="M2.500 0.500h4v5h-4zM0.500 6h8M4.500 6v5" fill="none" stroke="#fff" stroke-width="1"/><path d="M5.500 1v5" stroke="#fff"/></svg><svg style="left:191px;top:5px" width="10" height="9" viewBox="0 0 10 9" shape-rendering="auto"><path d="M1 0.500l8 8M9 0.500l-8 8" stroke="#fff" stroke-width="1.500"/></svg></div><div class="a" style="left:0;top:19px;width:205px;height:27px;background:#e3e7f0"></div><div class="a" style="left:1px;top:21px;width:202px;height:23px;background:#fff;border:1px solid #c5cbdb"></div><span class="t b" style="left:4px;top:26px;letter-spacing:0.45px">G:\Projects\All_Test\DAVS\</span><span class="t " style="left:168px;top:26px;max-width:20px;overflow:hidden">Web</span><div class="a" style="left:190px;top:24px;width:11px;height:18px;background:#d4d0c8"><div class="dd" style="left:2px;top:7px"></div></div><div class="a" style="left:0;top:46px;width:205px;height:25px;background:#bcc7d8"></div><div class="a" style="left:2px;top:47px;width:23px;height:22px;background:#ffe8a6;border:1px solid #e5c365"></div><span class="i" style="left:6px;top:50px;"><svg width="16" height="16" viewBox="0 0 16 16" shape-rendering="crispEdges"><rect x="0.500" y="1.500" width="6" height="5" fill="#fff" stroke="#333"/><path d="M2 4h3M3.500 2.500v3" stroke="#2a4ab8"/><rect x="0.500" y="9.500" width="6" height="5" fill="#fff" stroke="#333"/><path d="M2 12h3M3.500 10.500v3" stroke="#2a4ab8"/><path d="M8 3h6M8 5h4M8 11h6M8 13h4" stroke="#555"/></svg></span><span class="t" style="left:29px;top:48px;font-size:9px;font-weight:bold;color:#2a4ab8;line-height:9px;font-family:'Liberation Serif',serif">A</span><span class="t" style="left:29px;top:57px;font-size:9px;font-weight:bold;color:#a82020;line-height:9px;font-family:'Liberation Serif',serif">Z</span><svg style="left:38px;top:51px" width="7" height="14" viewBox="0 0 7 14"><path d="M3.500 0v12M0.500 9l3 4 3-4" fill="none" stroke="#000"/></svg><div class="sep" style="left:52px;top:50px;height:18px"></div><span class="i" style="left:58px;top:50px;"><svg width="16" height="16" viewBox="0 0 16 16" shape-rendering="crispEdges"><rect x="1.500" y="2.500" width="13" height="11" fill="#fff" stroke="#5a7ab8"/><rect x="2" y="3" width="12" height="2" fill="#4f86dc"/><rect x="4" y="7" width="3" height="2" fill="#555"/><path d="M8 8h5M4 11h9" stroke="#8a9ab8"/></svg></span></div><div class="a" style="left:1070px;top:651px;width:14px;height:138px;background:#f1f0ec"></div><div class="pg" style="top:652px;background:#f1f0ec"><div class="exp" style="left:2px;top:4px;border-color:#555"></div><span class="t b" style="left:17px;top:2px;color:#9aa7c4">Developer Web Server</span></div><div class="pg" style="top:669px;color:#000;border-bottom:1px dotted #e4e2dc"><span class="t " style="left:17px;top:2px;max-width:83px;overflow:hidden">Always Start Wh</span><span class="t " style="left:101px;top:2px;max-width:102px;overflow:hidden">True</span></div><div class="pg" style="top:686px;color:#8a8a8a;border-bottom:1px dotted #e4e2dc"><span class="t " style="left:17px;top:2px;max-width:83px;overflow:hidden">Port number</span><span class="t " style="left:101px;top:2px;max-width:102px;overflow:hidden">3527</span></div><div class="pg" style="top:703px;color:#000;border-bottom:1px dotted #e4e2dc"><span class="t " style="left:17px;top:2px;max-width:83px;overflow:hidden">Use dynamic por</span><span class="t " style="left:101px;top:2px;max-width:102px;overflow:hidden">True</span></div><div class="pg" style="top:720px;color:#000;border-bottom:1px dotted #e4e2dc"><span class="t " style="left:17px;top:2px;max-width:83px;overflow:hidden">Virtual path</span><span class="t " style="left:101px;top:2px;max-width:102px;overflow:hidden">/DAVS</span></div><div class="pg" style="top:737px;background:#f1f0ec"><div class="exp" style="left:2px;top:4px;border-color:#555"></div><span class="t b" style="left:17px;top:2px;color:#9aa7c4">Misc</span></div><div class="pg" style="top:754px;color:#8a8a8a;border-bottom:1px dotted #e4e2dc"><span class="t " style="left:17px;top:2px;max-width:83px;overflow:hidden">Full Path</span><span class="t " style="left:101px;top:2px;max-width:102px;overflow:hidden">G:\Projects\All_Test\DAVS\</span></div><div class="pg" style="top:771px;color:#8a8a8a;border-bottom:1px dotted #e4e2dc"><span class="t " style="left:17px;top:2px;max-width:83px;overflow:hidden">Opened URL</span><span class="t " style="left:101px;top:2px;max-width:102px;overflow:hidden">file:///G:/Projects/All_Test/DAVS/</span></div><div class="a" style="left:1070px;top:933px;width:204px;height:9px;background:#e6e9f0;border-top:1px solid #8a8a8a"><div class="a" style="left:0;top:2px;width:204px;height:2px;background:#fafbfd"></div></div><span class="t " style="left:3px;top:954px;color:#fff">Ready</span><div class="a" style="left:0;top:971px;width:1280px;height:1px;background:#ece9d8"></div>
</body></html>
